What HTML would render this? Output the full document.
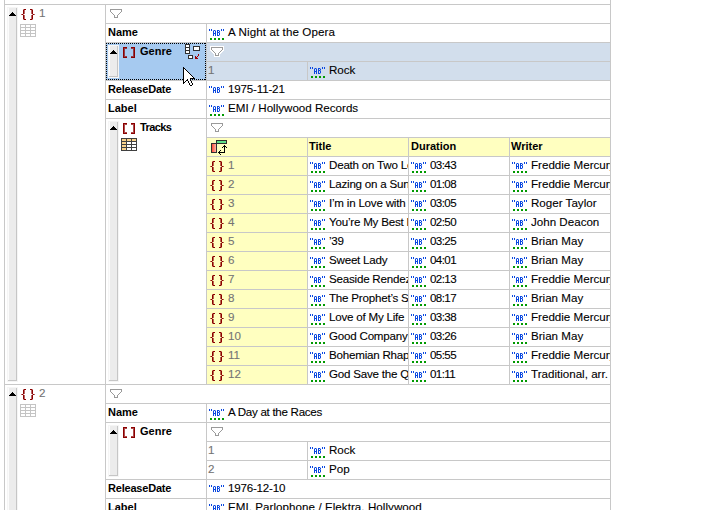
<!DOCTYPE html>
<html><head><meta charset="utf-8"><style>
html,body{margin:0;padding:0;background:#fff;}
body{width:725px;height:510px;position:relative;overflow:hidden;font-family:"Liberation Sans",sans-serif;}
svg{position:absolute;left:0;top:0;}
.t{position:absolute;white-space:nowrap;line-height:18px;height:18px;}
</style></head><body>
<svg width="725" height="510" shape-rendering="crispEdges">
<rect x="106" y="43" width="100" height="37" fill="#a6caf0"/>
<rect x="207" y="43" width="403" height="37" fill="#d2deec"/>
<rect x="207" y="138" width="403" height="18" fill="#ffffc0"/>
<rect x="207" y="157" width="100" height="227" fill="#ffffc0"/>
<rect x="4" y="0" width="1" height="510" fill="#c8c8c8"/>
<rect x="610" y="0" width="1" height="510" fill="#c8c8c8"/>
<rect x="105" y="4" width="1" height="506" fill="#c8c8c8"/>
<rect x="4" y="4" width="607" height="1" fill="#c8c8c8"/>
<rect x="105" y="23" width="506" height="1" fill="#c8c8c8"/>
<rect x="105" y="42" width="506" height="1" fill="#c8c8c8"/>
<rect x="105" y="80" width="506" height="1" fill="#c8c8c8"/>
<rect x="105" y="99" width="506" height="1" fill="#c8c8c8"/>
<rect x="105" y="118" width="506" height="1" fill="#c8c8c8"/>
<rect x="206" y="23" width="1" height="362" fill="#c8c8c8"/>
<rect x="206" y="61" width="405" height="1" fill="#c8c8c8"/>
<rect x="307" y="61" width="1" height="20" fill="#c8c8c8"/>
<rect x="206" y="137" width="405" height="1" fill="#c8c8c8"/>
<rect x="206" y="156" width="405" height="1" fill="#c8c8c8"/>
<rect x="206" y="175" width="405" height="1" fill="#c8c8c8"/>
<rect x="206" y="194" width="405" height="1" fill="#c8c8c8"/>
<rect x="206" y="213" width="405" height="1" fill="#c8c8c8"/>
<rect x="206" y="232" width="405" height="1" fill="#c8c8c8"/>
<rect x="206" y="251" width="405" height="1" fill="#c8c8c8"/>
<rect x="206" y="270" width="405" height="1" fill="#c8c8c8"/>
<rect x="206" y="289" width="405" height="1" fill="#c8c8c8"/>
<rect x="206" y="308" width="405" height="1" fill="#c8c8c8"/>
<rect x="206" y="327" width="405" height="1" fill="#c8c8c8"/>
<rect x="206" y="346" width="405" height="1" fill="#c8c8c8"/>
<rect x="206" y="365" width="405" height="1" fill="#c8c8c8"/>
<rect x="4" y="384" width="607" height="1" fill="#c8c8c8"/>
<rect x="307" y="137" width="1" height="248" fill="#c8c8c8"/>
<rect x="408" y="137" width="1" height="248" fill="#c8c8c8"/>
<rect x="509" y="137" width="1" height="248" fill="#c8c8c8"/>
<rect x="105" y="403" width="506" height="1" fill="#c8c8c8"/>
<rect x="105" y="422" width="506" height="1" fill="#c8c8c8"/>
<rect x="105" y="479" width="506" height="1" fill="#c8c8c8"/>
<rect x="105" y="498" width="506" height="1" fill="#c8c8c8"/>
<rect x="206" y="403" width="1" height="107" fill="#c8c8c8"/>
<rect x="206" y="441" width="405" height="1" fill="#c8c8c8"/>
<rect x="206" y="460" width="405" height="1" fill="#c8c8c8"/>
<rect x="307" y="441" width="1" height="39" fill="#c8c8c8"/>
<rect x="7" y="7" width="11" height="375" fill="#f5f5f5"/>
<rect x="8" y="8" width="9" height="373" fill="#c6c6c6"/>
<rect x="8" y="8" width="8" height="372" fill="#fcfcfc"/>
<rect x="9" y="8" width="7" height="372" fill="#ececec"/>
<rect x="12" y="12" width="1" height="1" fill="#000"/>
<rect x="11" y="13" width="3" height="1" fill="#000"/>
<rect x="10" y="14" width="5" height="1" fill="#000"/>
<rect x="9" y="15" width="7" height="1" fill="#000"/>
<rect x="24" y="9" width="2" height="1" fill="#8b0000"/>
<rect x="23" y="9" width="1" height="1" fill="#8b0000" opacity="0.5"/>
<rect x="23" y="10" width="1" height="4" fill="#8b0000"/>
<rect x="24" y="10" width="1" height="4" fill="#8b0000" opacity="0.6"/>
<rect x="22" y="14" width="1" height="1" fill="#8b0000"/>
<rect x="21" y="14" width="1" height="1" fill="#8b0000" opacity="0.6"/>
<rect x="23" y="14" width="1" height="1" fill="#8b0000" opacity="0.4"/>
<rect x="23" y="15" width="1" height="4" fill="#8b0000"/>
<rect x="24" y="15" width="1" height="4" fill="#8b0000" opacity="0.6"/>
<rect x="24" y="19" width="2" height="1" fill="#8b0000"/>
<rect x="23" y="19" width="1" height="1" fill="#8b0000" opacity="0.5"/>
<rect x="30" y="9" width="2" height="1" fill="#8b0000"/>
<rect x="32" y="9" width="1" height="1" fill="#8b0000" opacity="0.5"/>
<rect x="32" y="10" width="1" height="4" fill="#8b0000"/>
<rect x="31" y="10" width="1" height="4" fill="#8b0000" opacity="0.6"/>
<rect x="33" y="14" width="1" height="1" fill="#8b0000"/>
<rect x="34" y="14" width="1" height="1" fill="#8b0000" opacity="0.6"/>
<rect x="32" y="14" width="1" height="1" fill="#8b0000" opacity="0.4"/>
<rect x="32" y="15" width="1" height="4" fill="#8b0000"/>
<rect x="31" y="15" width="1" height="4" fill="#8b0000" opacity="0.6"/>
<rect x="30" y="19" width="2" height="1" fill="#8b0000"/>
<rect x="32" y="19" width="1" height="1" fill="#8b0000" opacity="0.5"/>
<rect x="20" y="24" width="16" height="13" fill="#c4c4c4"/>
<rect x="21" y="25" width="4" height="2" fill="#ffffff"/>
<rect x="26" y="25" width="4" height="2" fill="#ffffff"/>
<rect x="31" y="25" width="4" height="2" fill="#ffffff"/>
<rect x="21" y="28" width="4" height="2" fill="#ffffff"/>
<rect x="26" y="28" width="4" height="2" fill="#ffffff"/>
<rect x="31" y="28" width="4" height="2" fill="#ffffff"/>
<rect x="21" y="31" width="4" height="2" fill="#ffffff"/>
<rect x="26" y="31" width="4" height="2" fill="#ffffff"/>
<rect x="31" y="31" width="4" height="2" fill="#ffffff"/>
<rect x="21" y="34" width="4" height="2" fill="#ffffff"/>
<rect x="26" y="34" width="4" height="2" fill="#ffffff"/>
<rect x="31" y="34" width="4" height="2" fill="#ffffff"/>
<rect x="110" y="9" width="1" height="1" fill="#9a9a9a"/>
<rect x="111" y="9" width="1" height="1" fill="#9a9a9a"/>
<rect x="112" y="9" width="1" height="1" fill="#9a9a9a"/>
<rect x="113" y="9" width="1" height="1" fill="#9a9a9a"/>
<rect x="114" y="9" width="1" height="1" fill="#9a9a9a"/>
<rect x="115" y="9" width="1" height="1" fill="#9a9a9a"/>
<rect x="116" y="9" width="1" height="1" fill="#9a9a9a"/>
<rect x="117" y="9" width="1" height="1" fill="#9a9a9a"/>
<rect x="118" y="9" width="1" height="1" fill="#9a9a9a"/>
<rect x="119" y="9" width="1" height="1" fill="#9a9a9a"/>
<rect x="120" y="9" width="1" height="1" fill="#9a9a9a"/>
<rect x="121" y="9" width="1" height="1" fill="#9a9a9a"/>
<rect x="110" y="10" width="1" height="1" fill="#9a9a9a"/>
<rect x="111" y="10" width="1" height="1" fill="#ffffff"/>
<rect x="112" y="10" width="1" height="1" fill="#ffffff"/>
<rect x="113" y="10" width="1" height="1" fill="#ffffff"/>
<rect x="114" y="10" width="1" height="1" fill="#ffffff"/>
<rect x="115" y="10" width="1" height="1" fill="#ffffff"/>
<rect x="116" y="10" width="1" height="1" fill="#ffffff"/>
<rect x="117" y="10" width="1" height="1" fill="#ffffff"/>
<rect x="118" y="10" width="1" height="1" fill="#ffffff"/>
<rect x="119" y="10" width="1" height="1" fill="#ffffff"/>
<rect x="120" y="10" width="1" height="1" fill="#ffffff"/>
<rect x="121" y="10" width="1" height="1" fill="#9a9a9a"/>
<rect x="110" y="11" width="1" height="1" fill="#9a9a9a"/>
<rect x="111" y="11" width="1" height="1" fill="#ffffff"/>
<rect x="112" y="11" width="1" height="1" fill="#ffffff"/>
<rect x="113" y="11" width="1" height="1" fill="#ffffff"/>
<rect x="114" y="11" width="1" height="1" fill="#ffffff"/>
<rect x="115" y="11" width="1" height="1" fill="#ffffff"/>
<rect x="116" y="11" width="1" height="1" fill="#ffffff"/>
<rect x="117" y="11" width="1" height="1" fill="#ffffff"/>
<rect x="118" y="11" width="1" height="1" fill="#ffffff"/>
<rect x="119" y="11" width="1" height="1" fill="#ffffff"/>
<rect x="120" y="11" width="1" height="1" fill="#ffffff"/>
<rect x="121" y="11" width="1" height="1" fill="#9a9a9a"/>
<rect x="111" y="12" width="1" height="1" fill="#9a9a9a"/>
<rect x="112" y="12" width="1" height="1" fill="#ffffff"/>
<rect x="113" y="12" width="1" height="1" fill="#ffffff"/>
<rect x="114" y="12" width="1" height="1" fill="#ffffff"/>
<rect x="115" y="12" width="1" height="1" fill="#ffffff"/>
<rect x="116" y="12" width="1" height="1" fill="#ffffff"/>
<rect x="117" y="12" width="1" height="1" fill="#ffffff"/>
<rect x="118" y="12" width="1" height="1" fill="#ffffff"/>
<rect x="119" y="12" width="1" height="1" fill="#ffffff"/>
<rect x="120" y="12" width="1" height="1" fill="#9a9a9a"/>
<rect x="112" y="13" width="1" height="1" fill="#9a9a9a"/>
<rect x="113" y="13" width="1" height="1" fill="#ffffff"/>
<rect x="114" y="13" width="1" height="1" fill="#ffffff"/>
<rect x="115" y="13" width="1" height="1" fill="#ffffff"/>
<rect x="116" y="13" width="1" height="1" fill="#ffffff"/>
<rect x="117" y="13" width="1" height="1" fill="#ffffff"/>
<rect x="118" y="13" width="1" height="1" fill="#ffffff"/>
<rect x="119" y="13" width="1" height="1" fill="#9a9a9a"/>
<rect x="113" y="14" width="1" height="1" fill="#9a9a9a"/>
<rect x="114" y="14" width="1" height="1" fill="#ffffff"/>
<rect x="115" y="14" width="1" height="1" fill="#ffffff"/>
<rect x="116" y="14" width="1" height="1" fill="#ffffff"/>
<rect x="117" y="14" width="1" height="1" fill="#ffffff"/>
<rect x="118" y="14" width="1" height="1" fill="#9a9a9a"/>
<rect x="114" y="15" width="1" height="1" fill="#9a9a9a"/>
<rect x="115" y="15" width="1" height="1" fill="#ffffff"/>
<rect x="116" y="15" width="1" height="1" fill="#ffffff"/>
<rect x="117" y="15" width="1" height="1" fill="#9a9a9a"/>
<rect x="114" y="16" width="1" height="1" fill="#9a9a9a"/>
<rect x="115" y="16" width="1" height="1" fill="#ffffff"/>
<rect x="116" y="16" width="1" height="1" fill="#ffffff"/>
<rect x="117" y="16" width="1" height="1" fill="#9a9a9a"/>
<rect x="114" y="17" width="1" height="1" fill="#9a9a9a"/>
<rect x="115" y="17" width="1" height="1" fill="#9a9a9a"/>
<rect x="116" y="17" width="1" height="1" fill="#9a9a9a"/>
<rect x="117" y="17" width="1" height="1" fill="#9a9a9a"/>
<rect x="209" y="29" width="1" height="2" fill="#0a48e0"/>
<rect x="211" y="29" width="1" height="2" fill="#0a48e0"/>
<rect x="221" y="29" width="1" height="2" fill="#0a48e0"/>
<rect x="223" y="29" width="1" height="2" fill="#0a48e0"/>
<rect x="213" y="31" width="1" height="5" fill="#0a48e0"/>
<rect x="215" y="31" width="1" height="5" fill="#0a48e0"/>
<rect x="214" y="30" width="1" height="1" fill="#0a48e0"/>
<rect x="214" y="33" width="1" height="1" fill="#0a48e0"/>
<rect x="213" y="30" width="1" height="1" fill="#0a48e0" opacity="0.5"/>
<rect x="215" y="30" width="1" height="1" fill="#0a48e0" opacity="0.5"/>
<rect x="217" y="30" width="1" height="6" fill="#0a48e0"/>
<rect x="218" y="30" width="1" height="1" fill="#0a48e0"/>
<rect x="218" y="32" width="1" height="1" fill="#0a48e0"/>
<rect x="218" y="35" width="1" height="1" fill="#0a48e0"/>
<rect x="219" y="31" width="1" height="1" fill="#0a48e0"/>
<rect x="219" y="33" width="1" height="2" fill="#0a48e0"/>
<rect x="219" y="30" width="1" height="1" fill="#0a48e0" opacity="0.35"/>
<rect x="219" y="32" width="1" height="1" fill="#0a48e0" opacity="0.6"/>
<rect x="219" y="35" width="1" height="1" fill="#0a48e0" opacity="0.35"/>
<rect x="210" y="38" width="2" height="2" fill="#009a00"/>
<rect x="214" y="38" width="2" height="2" fill="#009a00"/>
<rect x="218" y="38" width="2" height="2" fill="#009a00"/>
<rect x="222" y="38" width="2" height="2" fill="#009a00"/>
<rect x="108" y="45" width="11" height="33" fill="#f5f5f5"/>
<rect x="109" y="46" width="9" height="31" fill="#c6c6c6"/>
<rect x="109" y="46" width="8" height="30" fill="#fcfcfc"/>
<rect x="110" y="46" width="7" height="30" fill="#ececec"/>
<rect x="113" y="50" width="1" height="1" fill="#000"/>
<rect x="112" y="51" width="3" height="1" fill="#000"/>
<rect x="111" y="52" width="5" height="1" fill="#000"/>
<rect x="110" y="53" width="7" height="1" fill="#000"/>
<rect x="123" y="47" width="1" height="11" fill="#8b0000"/>
<rect x="124" y="47" width="3" height="1" fill="#8b0000"/>
<rect x="124" y="57" width="3" height="1" fill="#8b0000"/>
<rect x="124" y="48" width="1" height="9" fill="#8b0000" opacity="0.7"/>
<rect x="125" y="48" width="2" height="1" fill="#8b0000" opacity="0.7"/>
<rect x="125" y="56" width="2" height="1" fill="#8b0000" opacity="0.7"/>
<rect x="134" y="47" width="1" height="11" fill="#8b0000"/>
<rect x="131" y="47" width="3" height="1" fill="#8b0000"/>
<rect x="131" y="57" width="3" height="1" fill="#8b0000"/>
<rect x="133" y="48" width="1" height="9" fill="#8b0000" opacity="0.7"/>
<rect x="131" y="48" width="2" height="1" fill="#8b0000" opacity="0.7"/>
<rect x="131" y="56" width="2" height="1" fill="#8b0000" opacity="0.7"/>
<rect x="211" y="51" width="1" height="1" fill="#ffffff"/>
<rect x="220" y="51" width="1" height="1" fill="#ffffff"/>
<rect x="212" y="52" width="1" height="1" fill="#ffffff"/>
<rect x="221" y="52" width="1" height="1" fill="#ffffff"/>
<rect x="219" y="56" width="1" height="1" fill="#ffffff"/>
<rect x="216" y="47" width="1" height="1" fill="#ffffff"/>
<rect x="213" y="49" width="1" height="1" fill="#ffffff"/>
<rect x="222" y="49" width="1" height="1" fill="#ffffff"/>
<rect x="213" y="53" width="1" height="1" fill="#ffffff"/>
<rect x="210" y="46" width="1" height="1" fill="#ffffff"/>
<rect x="218" y="46" width="1" height="1" fill="#ffffff"/>
<rect x="213" y="51" width="1" height="1" fill="#ffffff"/>
<rect x="217" y="50" width="1" height="1" fill="#ffffff"/>
<rect x="214" y="52" width="1" height="1" fill="#ffffff"/>
<rect x="210" y="47" width="1" height="1" fill="#ffffff"/>
<rect x="218" y="47" width="1" height="1" fill="#ffffff"/>
<rect x="215" y="49" width="1" height="1" fill="#ffffff"/>
<rect x="219" y="48" width="1" height="1" fill="#ffffff"/>
<rect x="215" y="53" width="1" height="1" fill="#ffffff"/>
<rect x="214" y="54" width="1" height="1" fill="#ffffff"/>
<rect x="211" y="46" width="1" height="1" fill="#ffffff"/>
<rect x="220" y="46" width="1" height="1" fill="#ffffff"/>
<rect x="219" y="50" width="1" height="1" fill="#ffffff"/>
<rect x="216" y="52" width="1" height="1" fill="#ffffff"/>
<rect x="215" y="55" width="1" height="1" fill="#ffffff"/>
<rect x="214" y="56" width="1" height="1" fill="#ffffff"/>
<rect x="211" y="47" width="1" height="1" fill="#ffffff"/>
<rect x="220" y="47" width="1" height="1" fill="#ffffff"/>
<rect x="221" y="48" width="1" height="1" fill="#ffffff"/>
<rect x="217" y="53" width="1" height="1" fill="#ffffff"/>
<rect x="216" y="54" width="1" height="1" fill="#ffffff"/>
<rect x="213" y="46" width="1" height="1" fill="#ffffff"/>
<rect x="222" y="46" width="1" height="1" fill="#ffffff"/>
<rect x="212" y="50" width="1" height="1" fill="#ffffff"/>
<rect x="221" y="50" width="1" height="1" fill="#ffffff"/>
<rect x="218" y="52" width="1" height="1" fill="#ffffff"/>
<rect x="216" y="56" width="1" height="1" fill="#ffffff"/>
<rect x="213" y="47" width="1" height="1" fill="#ffffff"/>
<rect x="214" y="48" width="1" height="1" fill="#ffffff"/>
<rect x="223" y="48" width="1" height="1" fill="#ffffff"/>
<rect x="218" y="54" width="1" height="1" fill="#ffffff"/>
<rect x="215" y="46" width="1" height="1" fill="#ffffff"/>
<rect x="214" y="50" width="1" height="1" fill="#ffffff"/>
<rect x="223" y="50" width="1" height="1" fill="#ffffff"/>
<rect x="220" y="52" width="1" height="1" fill="#ffffff"/>
<rect x="222" y="51" width="1" height="1" fill="#ffffff"/>
<rect x="218" y="56" width="1" height="1" fill="#ffffff"/>
<rect x="216" y="48" width="1" height="1" fill="#ffffff"/>
<rect x="216" y="50" width="1" height="1" fill="#ffffff"/>
<rect x="213" y="52" width="1" height="1" fill="#ffffff"/>
<rect x="215" y="51" width="1" height="1" fill="#ffffff"/>
<rect x="210" y="48" width="1" height="1" fill="#ffffff"/>
<rect x="218" y="48" width="1" height="1" fill="#ffffff"/>
<rect x="217" y="49" width="1" height="1" fill="#ffffff"/>
<rect x="210" y="50" width="1" height="1" fill="#ffffff"/>
<rect x="218" y="50" width="1" height="1" fill="#ffffff"/>
<rect x="215" y="52" width="1" height="1" fill="#ffffff"/>
<rect x="217" y="51" width="1" height="1" fill="#ffffff"/>
<rect x="217" y="55" width="1" height="1" fill="#ffffff"/>
<rect x="211" y="48" width="1" height="1" fill="#ffffff"/>
<rect x="220" y="48" width="1" height="1" fill="#ffffff"/>
<rect x="222" y="47" width="1" height="1" fill="#ffffff"/>
<rect x="219" y="49" width="1" height="1" fill="#ffffff"/>
<rect x="215" y="54" width="1" height="1" fill="#ffffff"/>
<rect x="219" y="53" width="1" height="1" fill="#ffffff"/>
<rect x="211" y="50" width="1" height="1" fill="#ffffff"/>
<rect x="220" y="50" width="1" height="1" fill="#ffffff"/>
<rect x="217" y="52" width="1" height="1" fill="#ffffff"/>
<rect x="219" y="51" width="1" height="1" fill="#ffffff"/>
<rect x="219" y="55" width="1" height="1" fill="#ffffff"/>
<rect x="213" y="48" width="1" height="1" fill="#ffffff"/>
<rect x="215" y="47" width="1" height="1" fill="#ffffff"/>
<rect x="212" y="49" width="1" height="1" fill="#ffffff"/>
<rect x="222" y="48" width="1" height="1" fill="#ffffff"/>
<rect x="221" y="49" width="1" height="1" fill="#ffffff"/>
<rect x="217" y="46" width="1" height="1" fill="#ffffff"/>
<rect x="213" y="50" width="1" height="1" fill="#ffffff"/>
<rect x="212" y="51" width="1" height="1" fill="#ffffff"/>
<rect x="222" y="50" width="1" height="1" fill="#ffffff"/>
<rect x="221" y="51" width="1" height="1" fill="#ffffff"/>
<rect x="215" y="48" width="1" height="1" fill="#ffffff"/>
<rect x="217" y="47" width="1" height="1" fill="#ffffff"/>
<rect x="214" y="49" width="1" height="1" fill="#ffffff"/>
<rect x="223" y="49" width="1" height="1" fill="#ffffff"/>
<rect x="214" y="53" width="1" height="1" fill="#ffffff"/>
<rect x="219" y="46" width="1" height="1" fill="#ffffff"/>
<rect x="215" y="50" width="1" height="1" fill="#ffffff"/>
<rect x="214" y="51" width="1" height="1" fill="#ffffff"/>
<rect x="214" y="55" width="1" height="1" fill="#ffffff"/>
<rect x="217" y="48" width="1" height="1" fill="#ffffff"/>
<rect x="219" y="47" width="1" height="1" fill="#ffffff"/>
<rect x="216" y="49" width="1" height="1" fill="#ffffff"/>
<rect x="216" y="53" width="1" height="1" fill="#ffffff"/>
<rect x="212" y="46" width="1" height="1" fill="#ffffff"/>
<rect x="221" y="46" width="1" height="1" fill="#ffffff"/>
<rect x="216" y="51" width="1" height="1" fill="#ffffff"/>
<rect x="216" y="55" width="1" height="1" fill="#ffffff"/>
<rect x="215" y="56" width="1" height="1" fill="#ffffff"/>
<rect x="212" y="47" width="1" height="1" fill="#ffffff"/>
<rect x="210" y="49" width="1" height="1" fill="#ffffff"/>
<rect x="221" y="47" width="1" height="1" fill="#ffffff"/>
<rect x="218" y="49" width="1" height="1" fill="#ffffff"/>
<rect x="218" y="53" width="1" height="1" fill="#ffffff"/>
<rect x="217" y="54" width="1" height="1" fill="#ffffff"/>
<rect x="214" y="46" width="1" height="1" fill="#ffffff"/>
<rect x="223" y="46" width="1" height="1" fill="#ffffff"/>
<rect x="218" y="51" width="1" height="1" fill="#ffffff"/>
<rect x="219" y="52" width="1" height="1" fill="#ffffff"/>
<rect x="218" y="55" width="1" height="1" fill="#ffffff"/>
<rect x="212" y="48" width="1" height="1" fill="#ffffff"/>
<rect x="214" y="47" width="1" height="1" fill="#ffffff"/>
<rect x="211" y="49" width="1" height="1" fill="#ffffff"/>
<rect x="217" y="56" width="1" height="1" fill="#ffffff"/>
<rect x="223" y="47" width="1" height="1" fill="#ffffff"/>
<rect x="220" y="49" width="1" height="1" fill="#ffffff"/>
<rect x="220" y="53" width="1" height="1" fill="#ffffff"/>
<rect x="219" y="54" width="1" height="1" fill="#ffffff"/>
<rect x="216" y="46" width="1" height="1" fill="#ffffff"/>
<rect x="211" y="47" width="1" height="1" fill="#9a9a9a"/>
<rect x="212" y="47" width="1" height="1" fill="#9a9a9a"/>
<rect x="213" y="47" width="1" height="1" fill="#9a9a9a"/>
<rect x="214" y="47" width="1" height="1" fill="#9a9a9a"/>
<rect x="215" y="47" width="1" height="1" fill="#9a9a9a"/>
<rect x="216" y="47" width="1" height="1" fill="#9a9a9a"/>
<rect x="217" y="47" width="1" height="1" fill="#9a9a9a"/>
<rect x="218" y="47" width="1" height="1" fill="#9a9a9a"/>
<rect x="219" y="47" width="1" height="1" fill="#9a9a9a"/>
<rect x="220" y="47" width="1" height="1" fill="#9a9a9a"/>
<rect x="221" y="47" width="1" height="1" fill="#9a9a9a"/>
<rect x="222" y="47" width="1" height="1" fill="#9a9a9a"/>
<rect x="211" y="48" width="1" height="1" fill="#9a9a9a"/>
<rect x="212" y="48" width="1" height="1" fill="#ffffff"/>
<rect x="213" y="48" width="1" height="1" fill="#ffffff"/>
<rect x="214" y="48" width="1" height="1" fill="#ffffff"/>
<rect x="215" y="48" width="1" height="1" fill="#ffffff"/>
<rect x="216" y="48" width="1" height="1" fill="#ffffff"/>
<rect x="217" y="48" width="1" height="1" fill="#ffffff"/>
<rect x="218" y="48" width="1" height="1" fill="#ffffff"/>
<rect x="219" y="48" width="1" height="1" fill="#ffffff"/>
<rect x="220" y="48" width="1" height="1" fill="#ffffff"/>
<rect x="221" y="48" width="1" height="1" fill="#ffffff"/>
<rect x="222" y="48" width="1" height="1" fill="#9a9a9a"/>
<rect x="211" y="49" width="1" height="1" fill="#9a9a9a"/>
<rect x="212" y="49" width="1" height="1" fill="#ffffff"/>
<rect x="213" y="49" width="1" height="1" fill="#ffffff"/>
<rect x="214" y="49" width="1" height="1" fill="#ffffff"/>
<rect x="215" y="49" width="1" height="1" fill="#ffffff"/>
<rect x="216" y="49" width="1" height="1" fill="#ffffff"/>
<rect x="217" y="49" width="1" height="1" fill="#ffffff"/>
<rect x="218" y="49" width="1" height="1" fill="#ffffff"/>
<rect x="219" y="49" width="1" height="1" fill="#ffffff"/>
<rect x="220" y="49" width="1" height="1" fill="#ffffff"/>
<rect x="221" y="49" width="1" height="1" fill="#ffffff"/>
<rect x="222" y="49" width="1" height="1" fill="#9a9a9a"/>
<rect x="212" y="50" width="1" height="1" fill="#9a9a9a"/>
<rect x="213" y="50" width="1" height="1" fill="#ffffff"/>
<rect x="214" y="50" width="1" height="1" fill="#ffffff"/>
<rect x="215" y="50" width="1" height="1" fill="#ffffff"/>
<rect x="216" y="50" width="1" height="1" fill="#ffffff"/>
<rect x="217" y="50" width="1" height="1" fill="#ffffff"/>
<rect x="218" y="50" width="1" height="1" fill="#ffffff"/>
<rect x="219" y="50" width="1" height="1" fill="#ffffff"/>
<rect x="220" y="50" width="1" height="1" fill="#ffffff"/>
<rect x="221" y="50" width="1" height="1" fill="#9a9a9a"/>
<rect x="213" y="51" width="1" height="1" fill="#9a9a9a"/>
<rect x="214" y="51" width="1" height="1" fill="#ffffff"/>
<rect x="215" y="51" width="1" height="1" fill="#ffffff"/>
<rect x="216" y="51" width="1" height="1" fill="#ffffff"/>
<rect x="217" y="51" width="1" height="1" fill="#ffffff"/>
<rect x="218" y="51" width="1" height="1" fill="#ffffff"/>
<rect x="219" y="51" width="1" height="1" fill="#ffffff"/>
<rect x="220" y="51" width="1" height="1" fill="#9a9a9a"/>
<rect x="214" y="52" width="1" height="1" fill="#9a9a9a"/>
<rect x="215" y="52" width="1" height="1" fill="#ffffff"/>
<rect x="216" y="52" width="1" height="1" fill="#ffffff"/>
<rect x="217" y="52" width="1" height="1" fill="#ffffff"/>
<rect x="218" y="52" width="1" height="1" fill="#ffffff"/>
<rect x="219" y="52" width="1" height="1" fill="#9a9a9a"/>
<rect x="215" y="53" width="1" height="1" fill="#9a9a9a"/>
<rect x="216" y="53" width="1" height="1" fill="#ffffff"/>
<rect x="217" y="53" width="1" height="1" fill="#ffffff"/>
<rect x="218" y="53" width="1" height="1" fill="#9a9a9a"/>
<rect x="215" y="54" width="1" height="1" fill="#9a9a9a"/>
<rect x="216" y="54" width="1" height="1" fill="#ffffff"/>
<rect x="217" y="54" width="1" height="1" fill="#ffffff"/>
<rect x="218" y="54" width="1" height="1" fill="#9a9a9a"/>
<rect x="215" y="55" width="1" height="1" fill="#9a9a9a"/>
<rect x="216" y="55" width="1" height="1" fill="#9a9a9a"/>
<rect x="217" y="55" width="1" height="1" fill="#9a9a9a"/>
<rect x="218" y="55" width="1" height="1" fill="#9a9a9a"/>
<rect x="310" y="67" width="1" height="2" fill="#0a48e0"/>
<rect x="312" y="67" width="1" height="2" fill="#0a48e0"/>
<rect x="322" y="67" width="1" height="2" fill="#0a48e0"/>
<rect x="324" y="67" width="1" height="2" fill="#0a48e0"/>
<rect x="314" y="69" width="1" height="5" fill="#0a48e0"/>
<rect x="316" y="69" width="1" height="5" fill="#0a48e0"/>
<rect x="315" y="68" width="1" height="1" fill="#0a48e0"/>
<rect x="315" y="71" width="1" height="1" fill="#0a48e0"/>
<rect x="314" y="68" width="1" height="1" fill="#0a48e0" opacity="0.5"/>
<rect x="316" y="68" width="1" height="1" fill="#0a48e0" opacity="0.5"/>
<rect x="318" y="68" width="1" height="6" fill="#0a48e0"/>
<rect x="319" y="68" width="1" height="1" fill="#0a48e0"/>
<rect x="319" y="70" width="1" height="1" fill="#0a48e0"/>
<rect x="319" y="73" width="1" height="1" fill="#0a48e0"/>
<rect x="320" y="69" width="1" height="1" fill="#0a48e0"/>
<rect x="320" y="71" width="1" height="2" fill="#0a48e0"/>
<rect x="320" y="68" width="1" height="1" fill="#0a48e0" opacity="0.35"/>
<rect x="320" y="70" width="1" height="1" fill="#0a48e0" opacity="0.6"/>
<rect x="320" y="73" width="1" height="1" fill="#0a48e0" opacity="0.35"/>
<rect x="311" y="76" width="2" height="2" fill="#009a00"/>
<rect x="315" y="76" width="2" height="2" fill="#009a00"/>
<rect x="319" y="76" width="2" height="2" fill="#009a00"/>
<rect x="323" y="76" width="2" height="2" fill="#009a00"/>
<rect x="209" y="86" width="1" height="2" fill="#0a48e0"/>
<rect x="211" y="86" width="1" height="2" fill="#0a48e0"/>
<rect x="221" y="86" width="1" height="2" fill="#0a48e0"/>
<rect x="223" y="86" width="1" height="2" fill="#0a48e0"/>
<rect x="213" y="88" width="1" height="5" fill="#0a48e0"/>
<rect x="215" y="88" width="1" height="5" fill="#0a48e0"/>
<rect x="214" y="87" width="1" height="1" fill="#0a48e0"/>
<rect x="214" y="90" width="1" height="1" fill="#0a48e0"/>
<rect x="213" y="87" width="1" height="1" fill="#0a48e0" opacity="0.5"/>
<rect x="215" y="87" width="1" height="1" fill="#0a48e0" opacity="0.5"/>
<rect x="217" y="87" width="1" height="6" fill="#0a48e0"/>
<rect x="218" y="87" width="1" height="1" fill="#0a48e0"/>
<rect x="218" y="89" width="1" height="1" fill="#0a48e0"/>
<rect x="218" y="92" width="1" height="1" fill="#0a48e0"/>
<rect x="219" y="88" width="1" height="1" fill="#0a48e0"/>
<rect x="219" y="90" width="1" height="2" fill="#0a48e0"/>
<rect x="219" y="87" width="1" height="1" fill="#0a48e0" opacity="0.35"/>
<rect x="219" y="89" width="1" height="1" fill="#0a48e0" opacity="0.6"/>
<rect x="219" y="92" width="1" height="1" fill="#0a48e0" opacity="0.35"/>
<rect x="209" y="105" width="1" height="2" fill="#0a48e0"/>
<rect x="211" y="105" width="1" height="2" fill="#0a48e0"/>
<rect x="221" y="105" width="1" height="2" fill="#0a48e0"/>
<rect x="223" y="105" width="1" height="2" fill="#0a48e0"/>
<rect x="213" y="107" width="1" height="5" fill="#0a48e0"/>
<rect x="215" y="107" width="1" height="5" fill="#0a48e0"/>
<rect x="214" y="106" width="1" height="1" fill="#0a48e0"/>
<rect x="214" y="109" width="1" height="1" fill="#0a48e0"/>
<rect x="213" y="106" width="1" height="1" fill="#0a48e0" opacity="0.5"/>
<rect x="215" y="106" width="1" height="1" fill="#0a48e0" opacity="0.5"/>
<rect x="217" y="106" width="1" height="6" fill="#0a48e0"/>
<rect x="218" y="106" width="1" height="1" fill="#0a48e0"/>
<rect x="218" y="108" width="1" height="1" fill="#0a48e0"/>
<rect x="218" y="111" width="1" height="1" fill="#0a48e0"/>
<rect x="219" y="107" width="1" height="1" fill="#0a48e0"/>
<rect x="219" y="109" width="1" height="2" fill="#0a48e0"/>
<rect x="219" y="106" width="1" height="1" fill="#0a48e0" opacity="0.35"/>
<rect x="219" y="108" width="1" height="1" fill="#0a48e0" opacity="0.6"/>
<rect x="219" y="111" width="1" height="1" fill="#0a48e0" opacity="0.35"/>
<rect x="210" y="114" width="2" height="2" fill="#009a00"/>
<rect x="214" y="114" width="2" height="2" fill="#009a00"/>
<rect x="218" y="114" width="2" height="2" fill="#009a00"/>
<rect x="222" y="114" width="2" height="2" fill="#009a00"/>
<rect x="108" y="121" width="11" height="261" fill="#f5f5f5"/>
<rect x="109" y="122" width="9" height="259" fill="#c6c6c6"/>
<rect x="109" y="122" width="8" height="258" fill="#fcfcfc"/>
<rect x="110" y="122" width="7" height="258" fill="#ececec"/>
<rect x="113" y="126" width="1" height="1" fill="#000"/>
<rect x="112" y="127" width="3" height="1" fill="#000"/>
<rect x="111" y="128" width="5" height="1" fill="#000"/>
<rect x="110" y="129" width="7" height="1" fill="#000"/>
<rect x="123" y="123" width="1" height="11" fill="#8b0000"/>
<rect x="124" y="123" width="3" height="1" fill="#8b0000"/>
<rect x="124" y="133" width="3" height="1" fill="#8b0000"/>
<rect x="124" y="124" width="1" height="9" fill="#8b0000" opacity="0.7"/>
<rect x="125" y="124" width="2" height="1" fill="#8b0000" opacity="0.7"/>
<rect x="125" y="132" width="2" height="1" fill="#8b0000" opacity="0.7"/>
<rect x="134" y="123" width="1" height="11" fill="#8b0000"/>
<rect x="131" y="123" width="3" height="1" fill="#8b0000"/>
<rect x="131" y="133" width="3" height="1" fill="#8b0000"/>
<rect x="133" y="124" width="1" height="9" fill="#8b0000" opacity="0.7"/>
<rect x="131" y="124" width="2" height="1" fill="#8b0000" opacity="0.7"/>
<rect x="131" y="132" width="2" height="1" fill="#8b0000" opacity="0.7"/>
<rect x="121" y="138" width="16" height="13" fill="#404040"/>
<rect x="122" y="139" width="4" height="2" fill="#f9d38c"/>
<rect x="127" y="139" width="4" height="2" fill="#f9d38c"/>
<rect x="132" y="139" width="4" height="2" fill="#f9d38c"/>
<rect x="122" y="142" width="4" height="2" fill="#f9d38c"/>
<rect x="127" y="142" width="4" height="2" fill="#ffffff"/>
<rect x="132" y="142" width="4" height="2" fill="#ffffff"/>
<rect x="122" y="145" width="4" height="2" fill="#f9d38c"/>
<rect x="127" y="145" width="4" height="2" fill="#ffffff"/>
<rect x="132" y="145" width="4" height="2" fill="#ffffff"/>
<rect x="122" y="148" width="4" height="2" fill="#f9d38c"/>
<rect x="127" y="148" width="4" height="2" fill="#ffffff"/>
<rect x="132" y="148" width="4" height="2" fill="#ffffff"/>
<rect x="211" y="123" width="1" height="1" fill="#9a9a9a"/>
<rect x="212" y="123" width="1" height="1" fill="#9a9a9a"/>
<rect x="213" y="123" width="1" height="1" fill="#9a9a9a"/>
<rect x="214" y="123" width="1" height="1" fill="#9a9a9a"/>
<rect x="215" y="123" width="1" height="1" fill="#9a9a9a"/>
<rect x="216" y="123" width="1" height="1" fill="#9a9a9a"/>
<rect x="217" y="123" width="1" height="1" fill="#9a9a9a"/>
<rect x="218" y="123" width="1" height="1" fill="#9a9a9a"/>
<rect x="219" y="123" width="1" height="1" fill="#9a9a9a"/>
<rect x="220" y="123" width="1" height="1" fill="#9a9a9a"/>
<rect x="221" y="123" width="1" height="1" fill="#9a9a9a"/>
<rect x="222" y="123" width="1" height="1" fill="#9a9a9a"/>
<rect x="211" y="124" width="1" height="1" fill="#9a9a9a"/>
<rect x="212" y="124" width="1" height="1" fill="#ffffff"/>
<rect x="213" y="124" width="1" height="1" fill="#ffffff"/>
<rect x="214" y="124" width="1" height="1" fill="#ffffff"/>
<rect x="215" y="124" width="1" height="1" fill="#ffffff"/>
<rect x="216" y="124" width="1" height="1" fill="#ffffff"/>
<rect x="217" y="124" width="1" height="1" fill="#ffffff"/>
<rect x="218" y="124" width="1" height="1" fill="#ffffff"/>
<rect x="219" y="124" width="1" height="1" fill="#ffffff"/>
<rect x="220" y="124" width="1" height="1" fill="#ffffff"/>
<rect x="221" y="124" width="1" height="1" fill="#ffffff"/>
<rect x="222" y="124" width="1" height="1" fill="#9a9a9a"/>
<rect x="211" y="125" width="1" height="1" fill="#9a9a9a"/>
<rect x="212" y="125" width="1" height="1" fill="#ffffff"/>
<rect x="213" y="125" width="1" height="1" fill="#ffffff"/>
<rect x="214" y="125" width="1" height="1" fill="#ffffff"/>
<rect x="215" y="125" width="1" height="1" fill="#ffffff"/>
<rect x="216" y="125" width="1" height="1" fill="#ffffff"/>
<rect x="217" y="125" width="1" height="1" fill="#ffffff"/>
<rect x="218" y="125" width="1" height="1" fill="#ffffff"/>
<rect x="219" y="125" width="1" height="1" fill="#ffffff"/>
<rect x="220" y="125" width="1" height="1" fill="#ffffff"/>
<rect x="221" y="125" width="1" height="1" fill="#ffffff"/>
<rect x="222" y="125" width="1" height="1" fill="#9a9a9a"/>
<rect x="212" y="126" width="1" height="1" fill="#9a9a9a"/>
<rect x="213" y="126" width="1" height="1" fill="#ffffff"/>
<rect x="214" y="126" width="1" height="1" fill="#ffffff"/>
<rect x="215" y="126" width="1" height="1" fill="#ffffff"/>
<rect x="216" y="126" width="1" height="1" fill="#ffffff"/>
<rect x="217" y="126" width="1" height="1" fill="#ffffff"/>
<rect x="218" y="126" width="1" height="1" fill="#ffffff"/>
<rect x="219" y="126" width="1" height="1" fill="#ffffff"/>
<rect x="220" y="126" width="1" height="1" fill="#ffffff"/>
<rect x="221" y="126" width="1" height="1" fill="#9a9a9a"/>
<rect x="213" y="127" width="1" height="1" fill="#9a9a9a"/>
<rect x="214" y="127" width="1" height="1" fill="#ffffff"/>
<rect x="215" y="127" width="1" height="1" fill="#ffffff"/>
<rect x="216" y="127" width="1" height="1" fill="#ffffff"/>
<rect x="217" y="127" width="1" height="1" fill="#ffffff"/>
<rect x="218" y="127" width="1" height="1" fill="#ffffff"/>
<rect x="219" y="127" width="1" height="1" fill="#ffffff"/>
<rect x="220" y="127" width="1" height="1" fill="#9a9a9a"/>
<rect x="214" y="128" width="1" height="1" fill="#9a9a9a"/>
<rect x="215" y="128" width="1" height="1" fill="#ffffff"/>
<rect x="216" y="128" width="1" height="1" fill="#ffffff"/>
<rect x="217" y="128" width="1" height="1" fill="#ffffff"/>
<rect x="218" y="128" width="1" height="1" fill="#ffffff"/>
<rect x="219" y="128" width="1" height="1" fill="#9a9a9a"/>
<rect x="215" y="129" width="1" height="1" fill="#9a9a9a"/>
<rect x="216" y="129" width="1" height="1" fill="#ffffff"/>
<rect x="217" y="129" width="1" height="1" fill="#ffffff"/>
<rect x="218" y="129" width="1" height="1" fill="#9a9a9a"/>
<rect x="215" y="130" width="1" height="1" fill="#9a9a9a"/>
<rect x="216" y="130" width="1" height="1" fill="#ffffff"/>
<rect x="217" y="130" width="1" height="1" fill="#ffffff"/>
<rect x="218" y="130" width="1" height="1" fill="#9a9a9a"/>
<rect x="215" y="131" width="1" height="1" fill="#9a9a9a"/>
<rect x="216" y="131" width="1" height="1" fill="#9a9a9a"/>
<rect x="217" y="131" width="1" height="1" fill="#9a9a9a"/>
<rect x="218" y="131" width="1" height="1" fill="#9a9a9a"/>
<rect x="213" y="161" width="2" height="1" fill="#8b0000"/>
<rect x="212" y="161" width="1" height="1" fill="#8b0000" opacity="0.5"/>
<rect x="212" y="162" width="1" height="4" fill="#8b0000"/>
<rect x="213" y="162" width="1" height="4" fill="#8b0000" opacity="0.6"/>
<rect x="211" y="166" width="1" height="1" fill="#8b0000"/>
<rect x="210" y="166" width="1" height="1" fill="#8b0000" opacity="0.6"/>
<rect x="212" y="166" width="1" height="1" fill="#8b0000" opacity="0.4"/>
<rect x="212" y="167" width="1" height="4" fill="#8b0000"/>
<rect x="213" y="167" width="1" height="4" fill="#8b0000" opacity="0.6"/>
<rect x="213" y="171" width="2" height="1" fill="#8b0000"/>
<rect x="212" y="171" width="1" height="1" fill="#8b0000" opacity="0.5"/>
<rect x="219" y="161" width="2" height="1" fill="#8b0000"/>
<rect x="221" y="161" width="1" height="1" fill="#8b0000" opacity="0.5"/>
<rect x="221" y="162" width="1" height="4" fill="#8b0000"/>
<rect x="220" y="162" width="1" height="4" fill="#8b0000" opacity="0.6"/>
<rect x="222" y="166" width="1" height="1" fill="#8b0000"/>
<rect x="223" y="166" width="1" height="1" fill="#8b0000" opacity="0.6"/>
<rect x="221" y="166" width="1" height="1" fill="#8b0000" opacity="0.4"/>
<rect x="221" y="167" width="1" height="4" fill="#8b0000"/>
<rect x="220" y="167" width="1" height="4" fill="#8b0000" opacity="0.6"/>
<rect x="219" y="171" width="2" height="1" fill="#8b0000"/>
<rect x="221" y="171" width="1" height="1" fill="#8b0000" opacity="0.5"/>
<rect x="310" y="162" width="1" height="2" fill="#0a48e0"/>
<rect x="312" y="162" width="1" height="2" fill="#0a48e0"/>
<rect x="322" y="162" width="1" height="2" fill="#0a48e0"/>
<rect x="324" y="162" width="1" height="2" fill="#0a48e0"/>
<rect x="314" y="164" width="1" height="5" fill="#0a48e0"/>
<rect x="316" y="164" width="1" height="5" fill="#0a48e0"/>
<rect x="315" y="163" width="1" height="1" fill="#0a48e0"/>
<rect x="315" y="166" width="1" height="1" fill="#0a48e0"/>
<rect x="314" y="163" width="1" height="1" fill="#0a48e0" opacity="0.5"/>
<rect x="316" y="163" width="1" height="1" fill="#0a48e0" opacity="0.5"/>
<rect x="318" y="163" width="1" height="6" fill="#0a48e0"/>
<rect x="319" y="163" width="1" height="1" fill="#0a48e0"/>
<rect x="319" y="165" width="1" height="1" fill="#0a48e0"/>
<rect x="319" y="168" width="1" height="1" fill="#0a48e0"/>
<rect x="320" y="164" width="1" height="1" fill="#0a48e0"/>
<rect x="320" y="166" width="1" height="2" fill="#0a48e0"/>
<rect x="320" y="163" width="1" height="1" fill="#0a48e0" opacity="0.35"/>
<rect x="320" y="165" width="1" height="1" fill="#0a48e0" opacity="0.6"/>
<rect x="320" y="168" width="1" height="1" fill="#0a48e0" opacity="0.35"/>
<rect x="311" y="171" width="2" height="2" fill="#009a00"/>
<rect x="315" y="171" width="2" height="2" fill="#009a00"/>
<rect x="319" y="171" width="2" height="2" fill="#009a00"/>
<rect x="323" y="171" width="2" height="2" fill="#009a00"/>
<rect x="411" y="162" width="1" height="2" fill="#0a48e0"/>
<rect x="413" y="162" width="1" height="2" fill="#0a48e0"/>
<rect x="423" y="162" width="1" height="2" fill="#0a48e0"/>
<rect x="425" y="162" width="1" height="2" fill="#0a48e0"/>
<rect x="415" y="164" width="1" height="5" fill="#0a48e0"/>
<rect x="417" y="164" width="1" height="5" fill="#0a48e0"/>
<rect x="416" y="163" width="1" height="1" fill="#0a48e0"/>
<rect x="416" y="166" width="1" height="1" fill="#0a48e0"/>
<rect x="415" y="163" width="1" height="1" fill="#0a48e0" opacity="0.5"/>
<rect x="417" y="163" width="1" height="1" fill="#0a48e0" opacity="0.5"/>
<rect x="419" y="163" width="1" height="6" fill="#0a48e0"/>
<rect x="420" y="163" width="1" height="1" fill="#0a48e0"/>
<rect x="420" y="165" width="1" height="1" fill="#0a48e0"/>
<rect x="420" y="168" width="1" height="1" fill="#0a48e0"/>
<rect x="421" y="164" width="1" height="1" fill="#0a48e0"/>
<rect x="421" y="166" width="1" height="2" fill="#0a48e0"/>
<rect x="421" y="163" width="1" height="1" fill="#0a48e0" opacity="0.35"/>
<rect x="421" y="165" width="1" height="1" fill="#0a48e0" opacity="0.6"/>
<rect x="421" y="168" width="1" height="1" fill="#0a48e0" opacity="0.35"/>
<rect x="412" y="171" width="2" height="2" fill="#009a00"/>
<rect x="416" y="171" width="2" height="2" fill="#009a00"/>
<rect x="420" y="171" width="2" height="2" fill="#009a00"/>
<rect x="424" y="171" width="2" height="2" fill="#009a00"/>
<rect x="512" y="162" width="1" height="2" fill="#0a48e0"/>
<rect x="514" y="162" width="1" height="2" fill="#0a48e0"/>
<rect x="524" y="162" width="1" height="2" fill="#0a48e0"/>
<rect x="526" y="162" width="1" height="2" fill="#0a48e0"/>
<rect x="516" y="164" width="1" height="5" fill="#0a48e0"/>
<rect x="518" y="164" width="1" height="5" fill="#0a48e0"/>
<rect x="517" y="163" width="1" height="1" fill="#0a48e0"/>
<rect x="517" y="166" width="1" height="1" fill="#0a48e0"/>
<rect x="516" y="163" width="1" height="1" fill="#0a48e0" opacity="0.5"/>
<rect x="518" y="163" width="1" height="1" fill="#0a48e0" opacity="0.5"/>
<rect x="520" y="163" width="1" height="6" fill="#0a48e0"/>
<rect x="521" y="163" width="1" height="1" fill="#0a48e0"/>
<rect x="521" y="165" width="1" height="1" fill="#0a48e0"/>
<rect x="521" y="168" width="1" height="1" fill="#0a48e0"/>
<rect x="522" y="164" width="1" height="1" fill="#0a48e0"/>
<rect x="522" y="166" width="1" height="2" fill="#0a48e0"/>
<rect x="522" y="163" width="1" height="1" fill="#0a48e0" opacity="0.35"/>
<rect x="522" y="165" width="1" height="1" fill="#0a48e0" opacity="0.6"/>
<rect x="522" y="168" width="1" height="1" fill="#0a48e0" opacity="0.35"/>
<rect x="513" y="171" width="2" height="2" fill="#009a00"/>
<rect x="517" y="171" width="2" height="2" fill="#009a00"/>
<rect x="521" y="171" width="2" height="2" fill="#009a00"/>
<rect x="525" y="171" width="2" height="2" fill="#009a00"/>
<rect x="213" y="180" width="2" height="1" fill="#8b0000"/>
<rect x="212" y="180" width="1" height="1" fill="#8b0000" opacity="0.5"/>
<rect x="212" y="181" width="1" height="4" fill="#8b0000"/>
<rect x="213" y="181" width="1" height="4" fill="#8b0000" opacity="0.6"/>
<rect x="211" y="185" width="1" height="1" fill="#8b0000"/>
<rect x="210" y="185" width="1" height="1" fill="#8b0000" opacity="0.6"/>
<rect x="212" y="185" width="1" height="1" fill="#8b0000" opacity="0.4"/>
<rect x="212" y="186" width="1" height="4" fill="#8b0000"/>
<rect x="213" y="186" width="1" height="4" fill="#8b0000" opacity="0.6"/>
<rect x="213" y="190" width="2" height="1" fill="#8b0000"/>
<rect x="212" y="190" width="1" height="1" fill="#8b0000" opacity="0.5"/>
<rect x="219" y="180" width="2" height="1" fill="#8b0000"/>
<rect x="221" y="180" width="1" height="1" fill="#8b0000" opacity="0.5"/>
<rect x="221" y="181" width="1" height="4" fill="#8b0000"/>
<rect x="220" y="181" width="1" height="4" fill="#8b0000" opacity="0.6"/>
<rect x="222" y="185" width="1" height="1" fill="#8b0000"/>
<rect x="223" y="185" width="1" height="1" fill="#8b0000" opacity="0.6"/>
<rect x="221" y="185" width="1" height="1" fill="#8b0000" opacity="0.4"/>
<rect x="221" y="186" width="1" height="4" fill="#8b0000"/>
<rect x="220" y="186" width="1" height="4" fill="#8b0000" opacity="0.6"/>
<rect x="219" y="190" width="2" height="1" fill="#8b0000"/>
<rect x="221" y="190" width="1" height="1" fill="#8b0000" opacity="0.5"/>
<rect x="310" y="181" width="1" height="2" fill="#0a48e0"/>
<rect x="312" y="181" width="1" height="2" fill="#0a48e0"/>
<rect x="322" y="181" width="1" height="2" fill="#0a48e0"/>
<rect x="324" y="181" width="1" height="2" fill="#0a48e0"/>
<rect x="314" y="183" width="1" height="5" fill="#0a48e0"/>
<rect x="316" y="183" width="1" height="5" fill="#0a48e0"/>
<rect x="315" y="182" width="1" height="1" fill="#0a48e0"/>
<rect x="315" y="185" width="1" height="1" fill="#0a48e0"/>
<rect x="314" y="182" width="1" height="1" fill="#0a48e0" opacity="0.5"/>
<rect x="316" y="182" width="1" height="1" fill="#0a48e0" opacity="0.5"/>
<rect x="318" y="182" width="1" height="6" fill="#0a48e0"/>
<rect x="319" y="182" width="1" height="1" fill="#0a48e0"/>
<rect x="319" y="184" width="1" height="1" fill="#0a48e0"/>
<rect x="319" y="187" width="1" height="1" fill="#0a48e0"/>
<rect x="320" y="183" width="1" height="1" fill="#0a48e0"/>
<rect x="320" y="185" width="1" height="2" fill="#0a48e0"/>
<rect x="320" y="182" width="1" height="1" fill="#0a48e0" opacity="0.35"/>
<rect x="320" y="184" width="1" height="1" fill="#0a48e0" opacity="0.6"/>
<rect x="320" y="187" width="1" height="1" fill="#0a48e0" opacity="0.35"/>
<rect x="311" y="190" width="2" height="2" fill="#009a00"/>
<rect x="315" y="190" width="2" height="2" fill="#009a00"/>
<rect x="319" y="190" width="2" height="2" fill="#009a00"/>
<rect x="323" y="190" width="2" height="2" fill="#009a00"/>
<rect x="411" y="181" width="1" height="2" fill="#0a48e0"/>
<rect x="413" y="181" width="1" height="2" fill="#0a48e0"/>
<rect x="423" y="181" width="1" height="2" fill="#0a48e0"/>
<rect x="425" y="181" width="1" height="2" fill="#0a48e0"/>
<rect x="415" y="183" width="1" height="5" fill="#0a48e0"/>
<rect x="417" y="183" width="1" height="5" fill="#0a48e0"/>
<rect x="416" y="182" width="1" height="1" fill="#0a48e0"/>
<rect x="416" y="185" width="1" height="1" fill="#0a48e0"/>
<rect x="415" y="182" width="1" height="1" fill="#0a48e0" opacity="0.5"/>
<rect x="417" y="182" width="1" height="1" fill="#0a48e0" opacity="0.5"/>
<rect x="419" y="182" width="1" height="6" fill="#0a48e0"/>
<rect x="420" y="182" width="1" height="1" fill="#0a48e0"/>
<rect x="420" y="184" width="1" height="1" fill="#0a48e0"/>
<rect x="420" y="187" width="1" height="1" fill="#0a48e0"/>
<rect x="421" y="183" width="1" height="1" fill="#0a48e0"/>
<rect x="421" y="185" width="1" height="2" fill="#0a48e0"/>
<rect x="421" y="182" width="1" height="1" fill="#0a48e0" opacity="0.35"/>
<rect x="421" y="184" width="1" height="1" fill="#0a48e0" opacity="0.6"/>
<rect x="421" y="187" width="1" height="1" fill="#0a48e0" opacity="0.35"/>
<rect x="412" y="190" width="2" height="2" fill="#009a00"/>
<rect x="416" y="190" width="2" height="2" fill="#009a00"/>
<rect x="420" y="190" width="2" height="2" fill="#009a00"/>
<rect x="424" y="190" width="2" height="2" fill="#009a00"/>
<rect x="512" y="181" width="1" height="2" fill="#0a48e0"/>
<rect x="514" y="181" width="1" height="2" fill="#0a48e0"/>
<rect x="524" y="181" width="1" height="2" fill="#0a48e0"/>
<rect x="526" y="181" width="1" height="2" fill="#0a48e0"/>
<rect x="516" y="183" width="1" height="5" fill="#0a48e0"/>
<rect x="518" y="183" width="1" height="5" fill="#0a48e0"/>
<rect x="517" y="182" width="1" height="1" fill="#0a48e0"/>
<rect x="517" y="185" width="1" height="1" fill="#0a48e0"/>
<rect x="516" y="182" width="1" height="1" fill="#0a48e0" opacity="0.5"/>
<rect x="518" y="182" width="1" height="1" fill="#0a48e0" opacity="0.5"/>
<rect x="520" y="182" width="1" height="6" fill="#0a48e0"/>
<rect x="521" y="182" width="1" height="1" fill="#0a48e0"/>
<rect x="521" y="184" width="1" height="1" fill="#0a48e0"/>
<rect x="521" y="187" width="1" height="1" fill="#0a48e0"/>
<rect x="522" y="183" width="1" height="1" fill="#0a48e0"/>
<rect x="522" y="185" width="1" height="2" fill="#0a48e0"/>
<rect x="522" y="182" width="1" height="1" fill="#0a48e0" opacity="0.35"/>
<rect x="522" y="184" width="1" height="1" fill="#0a48e0" opacity="0.6"/>
<rect x="522" y="187" width="1" height="1" fill="#0a48e0" opacity="0.35"/>
<rect x="513" y="190" width="2" height="2" fill="#009a00"/>
<rect x="517" y="190" width="2" height="2" fill="#009a00"/>
<rect x="521" y="190" width="2" height="2" fill="#009a00"/>
<rect x="525" y="190" width="2" height="2" fill="#009a00"/>
<rect x="213" y="199" width="2" height="1" fill="#8b0000"/>
<rect x="212" y="199" width="1" height="1" fill="#8b0000" opacity="0.5"/>
<rect x="212" y="200" width="1" height="4" fill="#8b0000"/>
<rect x="213" y="200" width="1" height="4" fill="#8b0000" opacity="0.6"/>
<rect x="211" y="204" width="1" height="1" fill="#8b0000"/>
<rect x="210" y="204" width="1" height="1" fill="#8b0000" opacity="0.6"/>
<rect x="212" y="204" width="1" height="1" fill="#8b0000" opacity="0.4"/>
<rect x="212" y="205" width="1" height="4" fill="#8b0000"/>
<rect x="213" y="205" width="1" height="4" fill="#8b0000" opacity="0.6"/>
<rect x="213" y="209" width="2" height="1" fill="#8b0000"/>
<rect x="212" y="209" width="1" height="1" fill="#8b0000" opacity="0.5"/>
<rect x="219" y="199" width="2" height="1" fill="#8b0000"/>
<rect x="221" y="199" width="1" height="1" fill="#8b0000" opacity="0.5"/>
<rect x="221" y="200" width="1" height="4" fill="#8b0000"/>
<rect x="220" y="200" width="1" height="4" fill="#8b0000" opacity="0.6"/>
<rect x="222" y="204" width="1" height="1" fill="#8b0000"/>
<rect x="223" y="204" width="1" height="1" fill="#8b0000" opacity="0.6"/>
<rect x="221" y="204" width="1" height="1" fill="#8b0000" opacity="0.4"/>
<rect x="221" y="205" width="1" height="4" fill="#8b0000"/>
<rect x="220" y="205" width="1" height="4" fill="#8b0000" opacity="0.6"/>
<rect x="219" y="209" width="2" height="1" fill="#8b0000"/>
<rect x="221" y="209" width="1" height="1" fill="#8b0000" opacity="0.5"/>
<rect x="310" y="200" width="1" height="2" fill="#0a48e0"/>
<rect x="312" y="200" width="1" height="2" fill="#0a48e0"/>
<rect x="322" y="200" width="1" height="2" fill="#0a48e0"/>
<rect x="324" y="200" width="1" height="2" fill="#0a48e0"/>
<rect x="314" y="202" width="1" height="5" fill="#0a48e0"/>
<rect x="316" y="202" width="1" height="5" fill="#0a48e0"/>
<rect x="315" y="201" width="1" height="1" fill="#0a48e0"/>
<rect x="315" y="204" width="1" height="1" fill="#0a48e0"/>
<rect x="314" y="201" width="1" height="1" fill="#0a48e0" opacity="0.5"/>
<rect x="316" y="201" width="1" height="1" fill="#0a48e0" opacity="0.5"/>
<rect x="318" y="201" width="1" height="6" fill="#0a48e0"/>
<rect x="319" y="201" width="1" height="1" fill="#0a48e0"/>
<rect x="319" y="203" width="1" height="1" fill="#0a48e0"/>
<rect x="319" y="206" width="1" height="1" fill="#0a48e0"/>
<rect x="320" y="202" width="1" height="1" fill="#0a48e0"/>
<rect x="320" y="204" width="1" height="2" fill="#0a48e0"/>
<rect x="320" y="201" width="1" height="1" fill="#0a48e0" opacity="0.35"/>
<rect x="320" y="203" width="1" height="1" fill="#0a48e0" opacity="0.6"/>
<rect x="320" y="206" width="1" height="1" fill="#0a48e0" opacity="0.35"/>
<rect x="311" y="209" width="2" height="2" fill="#009a00"/>
<rect x="315" y="209" width="2" height="2" fill="#009a00"/>
<rect x="319" y="209" width="2" height="2" fill="#009a00"/>
<rect x="323" y="209" width="2" height="2" fill="#009a00"/>
<rect x="411" y="200" width="1" height="2" fill="#0a48e0"/>
<rect x="413" y="200" width="1" height="2" fill="#0a48e0"/>
<rect x="423" y="200" width="1" height="2" fill="#0a48e0"/>
<rect x="425" y="200" width="1" height="2" fill="#0a48e0"/>
<rect x="415" y="202" width="1" height="5" fill="#0a48e0"/>
<rect x="417" y="202" width="1" height="5" fill="#0a48e0"/>
<rect x="416" y="201" width="1" height="1" fill="#0a48e0"/>
<rect x="416" y="204" width="1" height="1" fill="#0a48e0"/>
<rect x="415" y="201" width="1" height="1" fill="#0a48e0" opacity="0.5"/>
<rect x="417" y="201" width="1" height="1" fill="#0a48e0" opacity="0.5"/>
<rect x="419" y="201" width="1" height="6" fill="#0a48e0"/>
<rect x="420" y="201" width="1" height="1" fill="#0a48e0"/>
<rect x="420" y="203" width="1" height="1" fill="#0a48e0"/>
<rect x="420" y="206" width="1" height="1" fill="#0a48e0"/>
<rect x="421" y="202" width="1" height="1" fill="#0a48e0"/>
<rect x="421" y="204" width="1" height="2" fill="#0a48e0"/>
<rect x="421" y="201" width="1" height="1" fill="#0a48e0" opacity="0.35"/>
<rect x="421" y="203" width="1" height="1" fill="#0a48e0" opacity="0.6"/>
<rect x="421" y="206" width="1" height="1" fill="#0a48e0" opacity="0.35"/>
<rect x="412" y="209" width="2" height="2" fill="#009a00"/>
<rect x="416" y="209" width="2" height="2" fill="#009a00"/>
<rect x="420" y="209" width="2" height="2" fill="#009a00"/>
<rect x="424" y="209" width="2" height="2" fill="#009a00"/>
<rect x="512" y="200" width="1" height="2" fill="#0a48e0"/>
<rect x="514" y="200" width="1" height="2" fill="#0a48e0"/>
<rect x="524" y="200" width="1" height="2" fill="#0a48e0"/>
<rect x="526" y="200" width="1" height="2" fill="#0a48e0"/>
<rect x="516" y="202" width="1" height="5" fill="#0a48e0"/>
<rect x="518" y="202" width="1" height="5" fill="#0a48e0"/>
<rect x="517" y="201" width="1" height="1" fill="#0a48e0"/>
<rect x="517" y="204" width="1" height="1" fill="#0a48e0"/>
<rect x="516" y="201" width="1" height="1" fill="#0a48e0" opacity="0.5"/>
<rect x="518" y="201" width="1" height="1" fill="#0a48e0" opacity="0.5"/>
<rect x="520" y="201" width="1" height="6" fill="#0a48e0"/>
<rect x="521" y="201" width="1" height="1" fill="#0a48e0"/>
<rect x="521" y="203" width="1" height="1" fill="#0a48e0"/>
<rect x="521" y="206" width="1" height="1" fill="#0a48e0"/>
<rect x="522" y="202" width="1" height="1" fill="#0a48e0"/>
<rect x="522" y="204" width="1" height="2" fill="#0a48e0"/>
<rect x="522" y="201" width="1" height="1" fill="#0a48e0" opacity="0.35"/>
<rect x="522" y="203" width="1" height="1" fill="#0a48e0" opacity="0.6"/>
<rect x="522" y="206" width="1" height="1" fill="#0a48e0" opacity="0.35"/>
<rect x="513" y="209" width="2" height="2" fill="#009a00"/>
<rect x="517" y="209" width="2" height="2" fill="#009a00"/>
<rect x="521" y="209" width="2" height="2" fill="#009a00"/>
<rect x="525" y="209" width="2" height="2" fill="#009a00"/>
<rect x="213" y="218" width="2" height="1" fill="#8b0000"/>
<rect x="212" y="218" width="1" height="1" fill="#8b0000" opacity="0.5"/>
<rect x="212" y="219" width="1" height="4" fill="#8b0000"/>
<rect x="213" y="219" width="1" height="4" fill="#8b0000" opacity="0.6"/>
<rect x="211" y="223" width="1" height="1" fill="#8b0000"/>
<rect x="210" y="223" width="1" height="1" fill="#8b0000" opacity="0.6"/>
<rect x="212" y="223" width="1" height="1" fill="#8b0000" opacity="0.4"/>
<rect x="212" y="224" width="1" height="4" fill="#8b0000"/>
<rect x="213" y="224" width="1" height="4" fill="#8b0000" opacity="0.6"/>
<rect x="213" y="228" width="2" height="1" fill="#8b0000"/>
<rect x="212" y="228" width="1" height="1" fill="#8b0000" opacity="0.5"/>
<rect x="219" y="218" width="2" height="1" fill="#8b0000"/>
<rect x="221" y="218" width="1" height="1" fill="#8b0000" opacity="0.5"/>
<rect x="221" y="219" width="1" height="4" fill="#8b0000"/>
<rect x="220" y="219" width="1" height="4" fill="#8b0000" opacity="0.6"/>
<rect x="222" y="223" width="1" height="1" fill="#8b0000"/>
<rect x="223" y="223" width="1" height="1" fill="#8b0000" opacity="0.6"/>
<rect x="221" y="223" width="1" height="1" fill="#8b0000" opacity="0.4"/>
<rect x="221" y="224" width="1" height="4" fill="#8b0000"/>
<rect x="220" y="224" width="1" height="4" fill="#8b0000" opacity="0.6"/>
<rect x="219" y="228" width="2" height="1" fill="#8b0000"/>
<rect x="221" y="228" width="1" height="1" fill="#8b0000" opacity="0.5"/>
<rect x="310" y="219" width="1" height="2" fill="#0a48e0"/>
<rect x="312" y="219" width="1" height="2" fill="#0a48e0"/>
<rect x="322" y="219" width="1" height="2" fill="#0a48e0"/>
<rect x="324" y="219" width="1" height="2" fill="#0a48e0"/>
<rect x="314" y="221" width="1" height="5" fill="#0a48e0"/>
<rect x="316" y="221" width="1" height="5" fill="#0a48e0"/>
<rect x="315" y="220" width="1" height="1" fill="#0a48e0"/>
<rect x="315" y="223" width="1" height="1" fill="#0a48e0"/>
<rect x="314" y="220" width="1" height="1" fill="#0a48e0" opacity="0.5"/>
<rect x="316" y="220" width="1" height="1" fill="#0a48e0" opacity="0.5"/>
<rect x="318" y="220" width="1" height="6" fill="#0a48e0"/>
<rect x="319" y="220" width="1" height="1" fill="#0a48e0"/>
<rect x="319" y="222" width="1" height="1" fill="#0a48e0"/>
<rect x="319" y="225" width="1" height="1" fill="#0a48e0"/>
<rect x="320" y="221" width="1" height="1" fill="#0a48e0"/>
<rect x="320" y="223" width="1" height="2" fill="#0a48e0"/>
<rect x="320" y="220" width="1" height="1" fill="#0a48e0" opacity="0.35"/>
<rect x="320" y="222" width="1" height="1" fill="#0a48e0" opacity="0.6"/>
<rect x="320" y="225" width="1" height="1" fill="#0a48e0" opacity="0.35"/>
<rect x="311" y="228" width="2" height="2" fill="#009a00"/>
<rect x="315" y="228" width="2" height="2" fill="#009a00"/>
<rect x="319" y="228" width="2" height="2" fill="#009a00"/>
<rect x="323" y="228" width="2" height="2" fill="#009a00"/>
<rect x="411" y="219" width="1" height="2" fill="#0a48e0"/>
<rect x="413" y="219" width="1" height="2" fill="#0a48e0"/>
<rect x="423" y="219" width="1" height="2" fill="#0a48e0"/>
<rect x="425" y="219" width="1" height="2" fill="#0a48e0"/>
<rect x="415" y="221" width="1" height="5" fill="#0a48e0"/>
<rect x="417" y="221" width="1" height="5" fill="#0a48e0"/>
<rect x="416" y="220" width="1" height="1" fill="#0a48e0"/>
<rect x="416" y="223" width="1" height="1" fill="#0a48e0"/>
<rect x="415" y="220" width="1" height="1" fill="#0a48e0" opacity="0.5"/>
<rect x="417" y="220" width="1" height="1" fill="#0a48e0" opacity="0.5"/>
<rect x="419" y="220" width="1" height="6" fill="#0a48e0"/>
<rect x="420" y="220" width="1" height="1" fill="#0a48e0"/>
<rect x="420" y="222" width="1" height="1" fill="#0a48e0"/>
<rect x="420" y="225" width="1" height="1" fill="#0a48e0"/>
<rect x="421" y="221" width="1" height="1" fill="#0a48e0"/>
<rect x="421" y="223" width="1" height="2" fill="#0a48e0"/>
<rect x="421" y="220" width="1" height="1" fill="#0a48e0" opacity="0.35"/>
<rect x="421" y="222" width="1" height="1" fill="#0a48e0" opacity="0.6"/>
<rect x="421" y="225" width="1" height="1" fill="#0a48e0" opacity="0.35"/>
<rect x="412" y="228" width="2" height="2" fill="#009a00"/>
<rect x="416" y="228" width="2" height="2" fill="#009a00"/>
<rect x="420" y="228" width="2" height="2" fill="#009a00"/>
<rect x="424" y="228" width="2" height="2" fill="#009a00"/>
<rect x="512" y="219" width="1" height="2" fill="#0a48e0"/>
<rect x="514" y="219" width="1" height="2" fill="#0a48e0"/>
<rect x="524" y="219" width="1" height="2" fill="#0a48e0"/>
<rect x="526" y="219" width="1" height="2" fill="#0a48e0"/>
<rect x="516" y="221" width="1" height="5" fill="#0a48e0"/>
<rect x="518" y="221" width="1" height="5" fill="#0a48e0"/>
<rect x="517" y="220" width="1" height="1" fill="#0a48e0"/>
<rect x="517" y="223" width="1" height="1" fill="#0a48e0"/>
<rect x="516" y="220" width="1" height="1" fill="#0a48e0" opacity="0.5"/>
<rect x="518" y="220" width="1" height="1" fill="#0a48e0" opacity="0.5"/>
<rect x="520" y="220" width="1" height="6" fill="#0a48e0"/>
<rect x="521" y="220" width="1" height="1" fill="#0a48e0"/>
<rect x="521" y="222" width="1" height="1" fill="#0a48e0"/>
<rect x="521" y="225" width="1" height="1" fill="#0a48e0"/>
<rect x="522" y="221" width="1" height="1" fill="#0a48e0"/>
<rect x="522" y="223" width="1" height="2" fill="#0a48e0"/>
<rect x="522" y="220" width="1" height="1" fill="#0a48e0" opacity="0.35"/>
<rect x="522" y="222" width="1" height="1" fill="#0a48e0" opacity="0.6"/>
<rect x="522" y="225" width="1" height="1" fill="#0a48e0" opacity="0.35"/>
<rect x="513" y="228" width="2" height="2" fill="#009a00"/>
<rect x="517" y="228" width="2" height="2" fill="#009a00"/>
<rect x="521" y="228" width="2" height="2" fill="#009a00"/>
<rect x="525" y="228" width="2" height="2" fill="#009a00"/>
<rect x="213" y="237" width="2" height="1" fill="#8b0000"/>
<rect x="212" y="237" width="1" height="1" fill="#8b0000" opacity="0.5"/>
<rect x="212" y="238" width="1" height="4" fill="#8b0000"/>
<rect x="213" y="238" width="1" height="4" fill="#8b0000" opacity="0.6"/>
<rect x="211" y="242" width="1" height="1" fill="#8b0000"/>
<rect x="210" y="242" width="1" height="1" fill="#8b0000" opacity="0.6"/>
<rect x="212" y="242" width="1" height="1" fill="#8b0000" opacity="0.4"/>
<rect x="212" y="243" width="1" height="4" fill="#8b0000"/>
<rect x="213" y="243" width="1" height="4" fill="#8b0000" opacity="0.6"/>
<rect x="213" y="247" width="2" height="1" fill="#8b0000"/>
<rect x="212" y="247" width="1" height="1" fill="#8b0000" opacity="0.5"/>
<rect x="219" y="237" width="2" height="1" fill="#8b0000"/>
<rect x="221" y="237" width="1" height="1" fill="#8b0000" opacity="0.5"/>
<rect x="221" y="238" width="1" height="4" fill="#8b0000"/>
<rect x="220" y="238" width="1" height="4" fill="#8b0000" opacity="0.6"/>
<rect x="222" y="242" width="1" height="1" fill="#8b0000"/>
<rect x="223" y="242" width="1" height="1" fill="#8b0000" opacity="0.6"/>
<rect x="221" y="242" width="1" height="1" fill="#8b0000" opacity="0.4"/>
<rect x="221" y="243" width="1" height="4" fill="#8b0000"/>
<rect x="220" y="243" width="1" height="4" fill="#8b0000" opacity="0.6"/>
<rect x="219" y="247" width="2" height="1" fill="#8b0000"/>
<rect x="221" y="247" width="1" height="1" fill="#8b0000" opacity="0.5"/>
<rect x="310" y="238" width="1" height="2" fill="#0a48e0"/>
<rect x="312" y="238" width="1" height="2" fill="#0a48e0"/>
<rect x="322" y="238" width="1" height="2" fill="#0a48e0"/>
<rect x="324" y="238" width="1" height="2" fill="#0a48e0"/>
<rect x="314" y="240" width="1" height="5" fill="#0a48e0"/>
<rect x="316" y="240" width="1" height="5" fill="#0a48e0"/>
<rect x="315" y="239" width="1" height="1" fill="#0a48e0"/>
<rect x="315" y="242" width="1" height="1" fill="#0a48e0"/>
<rect x="314" y="239" width="1" height="1" fill="#0a48e0" opacity="0.5"/>
<rect x="316" y="239" width="1" height="1" fill="#0a48e0" opacity="0.5"/>
<rect x="318" y="239" width="1" height="6" fill="#0a48e0"/>
<rect x="319" y="239" width="1" height="1" fill="#0a48e0"/>
<rect x="319" y="241" width="1" height="1" fill="#0a48e0"/>
<rect x="319" y="244" width="1" height="1" fill="#0a48e0"/>
<rect x="320" y="240" width="1" height="1" fill="#0a48e0"/>
<rect x="320" y="242" width="1" height="2" fill="#0a48e0"/>
<rect x="320" y="239" width="1" height="1" fill="#0a48e0" opacity="0.35"/>
<rect x="320" y="241" width="1" height="1" fill="#0a48e0" opacity="0.6"/>
<rect x="320" y="244" width="1" height="1" fill="#0a48e0" opacity="0.35"/>
<rect x="311" y="247" width="2" height="2" fill="#009a00"/>
<rect x="315" y="247" width="2" height="2" fill="#009a00"/>
<rect x="319" y="247" width="2" height="2" fill="#009a00"/>
<rect x="323" y="247" width="2" height="2" fill="#009a00"/>
<rect x="411" y="238" width="1" height="2" fill="#0a48e0"/>
<rect x="413" y="238" width="1" height="2" fill="#0a48e0"/>
<rect x="423" y="238" width="1" height="2" fill="#0a48e0"/>
<rect x="425" y="238" width="1" height="2" fill="#0a48e0"/>
<rect x="415" y="240" width="1" height="5" fill="#0a48e0"/>
<rect x="417" y="240" width="1" height="5" fill="#0a48e0"/>
<rect x="416" y="239" width="1" height="1" fill="#0a48e0"/>
<rect x="416" y="242" width="1" height="1" fill="#0a48e0"/>
<rect x="415" y="239" width="1" height="1" fill="#0a48e0" opacity="0.5"/>
<rect x="417" y="239" width="1" height="1" fill="#0a48e0" opacity="0.5"/>
<rect x="419" y="239" width="1" height="6" fill="#0a48e0"/>
<rect x="420" y="239" width="1" height="1" fill="#0a48e0"/>
<rect x="420" y="241" width="1" height="1" fill="#0a48e0"/>
<rect x="420" y="244" width="1" height="1" fill="#0a48e0"/>
<rect x="421" y="240" width="1" height="1" fill="#0a48e0"/>
<rect x="421" y="242" width="1" height="2" fill="#0a48e0"/>
<rect x="421" y="239" width="1" height="1" fill="#0a48e0" opacity="0.35"/>
<rect x="421" y="241" width="1" height="1" fill="#0a48e0" opacity="0.6"/>
<rect x="421" y="244" width="1" height="1" fill="#0a48e0" opacity="0.35"/>
<rect x="412" y="247" width="2" height="2" fill="#009a00"/>
<rect x="416" y="247" width="2" height="2" fill="#009a00"/>
<rect x="420" y="247" width="2" height="2" fill="#009a00"/>
<rect x="424" y="247" width="2" height="2" fill="#009a00"/>
<rect x="512" y="238" width="1" height="2" fill="#0a48e0"/>
<rect x="514" y="238" width="1" height="2" fill="#0a48e0"/>
<rect x="524" y="238" width="1" height="2" fill="#0a48e0"/>
<rect x="526" y="238" width="1" height="2" fill="#0a48e0"/>
<rect x="516" y="240" width="1" height="5" fill="#0a48e0"/>
<rect x="518" y="240" width="1" height="5" fill="#0a48e0"/>
<rect x="517" y="239" width="1" height="1" fill="#0a48e0"/>
<rect x="517" y="242" width="1" height="1" fill="#0a48e0"/>
<rect x="516" y="239" width="1" height="1" fill="#0a48e0" opacity="0.5"/>
<rect x="518" y="239" width="1" height="1" fill="#0a48e0" opacity="0.5"/>
<rect x="520" y="239" width="1" height="6" fill="#0a48e0"/>
<rect x="521" y="239" width="1" height="1" fill="#0a48e0"/>
<rect x="521" y="241" width="1" height="1" fill="#0a48e0"/>
<rect x="521" y="244" width="1" height="1" fill="#0a48e0"/>
<rect x="522" y="240" width="1" height="1" fill="#0a48e0"/>
<rect x="522" y="242" width="1" height="2" fill="#0a48e0"/>
<rect x="522" y="239" width="1" height="1" fill="#0a48e0" opacity="0.35"/>
<rect x="522" y="241" width="1" height="1" fill="#0a48e0" opacity="0.6"/>
<rect x="522" y="244" width="1" height="1" fill="#0a48e0" opacity="0.35"/>
<rect x="513" y="247" width="2" height="2" fill="#009a00"/>
<rect x="517" y="247" width="2" height="2" fill="#009a00"/>
<rect x="521" y="247" width="2" height="2" fill="#009a00"/>
<rect x="525" y="247" width="2" height="2" fill="#009a00"/>
<rect x="213" y="256" width="2" height="1" fill="#8b0000"/>
<rect x="212" y="256" width="1" height="1" fill="#8b0000" opacity="0.5"/>
<rect x="212" y="257" width="1" height="4" fill="#8b0000"/>
<rect x="213" y="257" width="1" height="4" fill="#8b0000" opacity="0.6"/>
<rect x="211" y="261" width="1" height="1" fill="#8b0000"/>
<rect x="210" y="261" width="1" height="1" fill="#8b0000" opacity="0.6"/>
<rect x="212" y="261" width="1" height="1" fill="#8b0000" opacity="0.4"/>
<rect x="212" y="262" width="1" height="4" fill="#8b0000"/>
<rect x="213" y="262" width="1" height="4" fill="#8b0000" opacity="0.6"/>
<rect x="213" y="266" width="2" height="1" fill="#8b0000"/>
<rect x="212" y="266" width="1" height="1" fill="#8b0000" opacity="0.5"/>
<rect x="219" y="256" width="2" height="1" fill="#8b0000"/>
<rect x="221" y="256" width="1" height="1" fill="#8b0000" opacity="0.5"/>
<rect x="221" y="257" width="1" height="4" fill="#8b0000"/>
<rect x="220" y="257" width="1" height="4" fill="#8b0000" opacity="0.6"/>
<rect x="222" y="261" width="1" height="1" fill="#8b0000"/>
<rect x="223" y="261" width="1" height="1" fill="#8b0000" opacity="0.6"/>
<rect x="221" y="261" width="1" height="1" fill="#8b0000" opacity="0.4"/>
<rect x="221" y="262" width="1" height="4" fill="#8b0000"/>
<rect x="220" y="262" width="1" height="4" fill="#8b0000" opacity="0.6"/>
<rect x="219" y="266" width="2" height="1" fill="#8b0000"/>
<rect x="221" y="266" width="1" height="1" fill="#8b0000" opacity="0.5"/>
<rect x="310" y="257" width="1" height="2" fill="#0a48e0"/>
<rect x="312" y="257" width="1" height="2" fill="#0a48e0"/>
<rect x="322" y="257" width="1" height="2" fill="#0a48e0"/>
<rect x="324" y="257" width="1" height="2" fill="#0a48e0"/>
<rect x="314" y="259" width="1" height="5" fill="#0a48e0"/>
<rect x="316" y="259" width="1" height="5" fill="#0a48e0"/>
<rect x="315" y="258" width="1" height="1" fill="#0a48e0"/>
<rect x="315" y="261" width="1" height="1" fill="#0a48e0"/>
<rect x="314" y="258" width="1" height="1" fill="#0a48e0" opacity="0.5"/>
<rect x="316" y="258" width="1" height="1" fill="#0a48e0" opacity="0.5"/>
<rect x="318" y="258" width="1" height="6" fill="#0a48e0"/>
<rect x="319" y="258" width="1" height="1" fill="#0a48e0"/>
<rect x="319" y="260" width="1" height="1" fill="#0a48e0"/>
<rect x="319" y="263" width="1" height="1" fill="#0a48e0"/>
<rect x="320" y="259" width="1" height="1" fill="#0a48e0"/>
<rect x="320" y="261" width="1" height="2" fill="#0a48e0"/>
<rect x="320" y="258" width="1" height="1" fill="#0a48e0" opacity="0.35"/>
<rect x="320" y="260" width="1" height="1" fill="#0a48e0" opacity="0.6"/>
<rect x="320" y="263" width="1" height="1" fill="#0a48e0" opacity="0.35"/>
<rect x="311" y="266" width="2" height="2" fill="#009a00"/>
<rect x="315" y="266" width="2" height="2" fill="#009a00"/>
<rect x="319" y="266" width="2" height="2" fill="#009a00"/>
<rect x="323" y="266" width="2" height="2" fill="#009a00"/>
<rect x="411" y="257" width="1" height="2" fill="#0a48e0"/>
<rect x="413" y="257" width="1" height="2" fill="#0a48e0"/>
<rect x="423" y="257" width="1" height="2" fill="#0a48e0"/>
<rect x="425" y="257" width="1" height="2" fill="#0a48e0"/>
<rect x="415" y="259" width="1" height="5" fill="#0a48e0"/>
<rect x="417" y="259" width="1" height="5" fill="#0a48e0"/>
<rect x="416" y="258" width="1" height="1" fill="#0a48e0"/>
<rect x="416" y="261" width="1" height="1" fill="#0a48e0"/>
<rect x="415" y="258" width="1" height="1" fill="#0a48e0" opacity="0.5"/>
<rect x="417" y="258" width="1" height="1" fill="#0a48e0" opacity="0.5"/>
<rect x="419" y="258" width="1" height="6" fill="#0a48e0"/>
<rect x="420" y="258" width="1" height="1" fill="#0a48e0"/>
<rect x="420" y="260" width="1" height="1" fill="#0a48e0"/>
<rect x="420" y="263" width="1" height="1" fill="#0a48e0"/>
<rect x="421" y="259" width="1" height="1" fill="#0a48e0"/>
<rect x="421" y="261" width="1" height="2" fill="#0a48e0"/>
<rect x="421" y="258" width="1" height="1" fill="#0a48e0" opacity="0.35"/>
<rect x="421" y="260" width="1" height="1" fill="#0a48e0" opacity="0.6"/>
<rect x="421" y="263" width="1" height="1" fill="#0a48e0" opacity="0.35"/>
<rect x="412" y="266" width="2" height="2" fill="#009a00"/>
<rect x="416" y="266" width="2" height="2" fill="#009a00"/>
<rect x="420" y="266" width="2" height="2" fill="#009a00"/>
<rect x="424" y="266" width="2" height="2" fill="#009a00"/>
<rect x="512" y="257" width="1" height="2" fill="#0a48e0"/>
<rect x="514" y="257" width="1" height="2" fill="#0a48e0"/>
<rect x="524" y="257" width="1" height="2" fill="#0a48e0"/>
<rect x="526" y="257" width="1" height="2" fill="#0a48e0"/>
<rect x="516" y="259" width="1" height="5" fill="#0a48e0"/>
<rect x="518" y="259" width="1" height="5" fill="#0a48e0"/>
<rect x="517" y="258" width="1" height="1" fill="#0a48e0"/>
<rect x="517" y="261" width="1" height="1" fill="#0a48e0"/>
<rect x="516" y="258" width="1" height="1" fill="#0a48e0" opacity="0.5"/>
<rect x="518" y="258" width="1" height="1" fill="#0a48e0" opacity="0.5"/>
<rect x="520" y="258" width="1" height="6" fill="#0a48e0"/>
<rect x="521" y="258" width="1" height="1" fill="#0a48e0"/>
<rect x="521" y="260" width="1" height="1" fill="#0a48e0"/>
<rect x="521" y="263" width="1" height="1" fill="#0a48e0"/>
<rect x="522" y="259" width="1" height="1" fill="#0a48e0"/>
<rect x="522" y="261" width="1" height="2" fill="#0a48e0"/>
<rect x="522" y="258" width="1" height="1" fill="#0a48e0" opacity="0.35"/>
<rect x="522" y="260" width="1" height="1" fill="#0a48e0" opacity="0.6"/>
<rect x="522" y="263" width="1" height="1" fill="#0a48e0" opacity="0.35"/>
<rect x="513" y="266" width="2" height="2" fill="#009a00"/>
<rect x="517" y="266" width="2" height="2" fill="#009a00"/>
<rect x="521" y="266" width="2" height="2" fill="#009a00"/>
<rect x="525" y="266" width="2" height="2" fill="#009a00"/>
<rect x="213" y="275" width="2" height="1" fill="#8b0000"/>
<rect x="212" y="275" width="1" height="1" fill="#8b0000" opacity="0.5"/>
<rect x="212" y="276" width="1" height="4" fill="#8b0000"/>
<rect x="213" y="276" width="1" height="4" fill="#8b0000" opacity="0.6"/>
<rect x="211" y="280" width="1" height="1" fill="#8b0000"/>
<rect x="210" y="280" width="1" height="1" fill="#8b0000" opacity="0.6"/>
<rect x="212" y="280" width="1" height="1" fill="#8b0000" opacity="0.4"/>
<rect x="212" y="281" width="1" height="4" fill="#8b0000"/>
<rect x="213" y="281" width="1" height="4" fill="#8b0000" opacity="0.6"/>
<rect x="213" y="285" width="2" height="1" fill="#8b0000"/>
<rect x="212" y="285" width="1" height="1" fill="#8b0000" opacity="0.5"/>
<rect x="219" y="275" width="2" height="1" fill="#8b0000"/>
<rect x="221" y="275" width="1" height="1" fill="#8b0000" opacity="0.5"/>
<rect x="221" y="276" width="1" height="4" fill="#8b0000"/>
<rect x="220" y="276" width="1" height="4" fill="#8b0000" opacity="0.6"/>
<rect x="222" y="280" width="1" height="1" fill="#8b0000"/>
<rect x="223" y="280" width="1" height="1" fill="#8b0000" opacity="0.6"/>
<rect x="221" y="280" width="1" height="1" fill="#8b0000" opacity="0.4"/>
<rect x="221" y="281" width="1" height="4" fill="#8b0000"/>
<rect x="220" y="281" width="1" height="4" fill="#8b0000" opacity="0.6"/>
<rect x="219" y="285" width="2" height="1" fill="#8b0000"/>
<rect x="221" y="285" width="1" height="1" fill="#8b0000" opacity="0.5"/>
<rect x="310" y="276" width="1" height="2" fill="#0a48e0"/>
<rect x="312" y="276" width="1" height="2" fill="#0a48e0"/>
<rect x="322" y="276" width="1" height="2" fill="#0a48e0"/>
<rect x="324" y="276" width="1" height="2" fill="#0a48e0"/>
<rect x="314" y="278" width="1" height="5" fill="#0a48e0"/>
<rect x="316" y="278" width="1" height="5" fill="#0a48e0"/>
<rect x="315" y="277" width="1" height="1" fill="#0a48e0"/>
<rect x="315" y="280" width="1" height="1" fill="#0a48e0"/>
<rect x="314" y="277" width="1" height="1" fill="#0a48e0" opacity="0.5"/>
<rect x="316" y="277" width="1" height="1" fill="#0a48e0" opacity="0.5"/>
<rect x="318" y="277" width="1" height="6" fill="#0a48e0"/>
<rect x="319" y="277" width="1" height="1" fill="#0a48e0"/>
<rect x="319" y="279" width="1" height="1" fill="#0a48e0"/>
<rect x="319" y="282" width="1" height="1" fill="#0a48e0"/>
<rect x="320" y="278" width="1" height="1" fill="#0a48e0"/>
<rect x="320" y="280" width="1" height="2" fill="#0a48e0"/>
<rect x="320" y="277" width="1" height="1" fill="#0a48e0" opacity="0.35"/>
<rect x="320" y="279" width="1" height="1" fill="#0a48e0" opacity="0.6"/>
<rect x="320" y="282" width="1" height="1" fill="#0a48e0" opacity="0.35"/>
<rect x="311" y="285" width="2" height="2" fill="#009a00"/>
<rect x="315" y="285" width="2" height="2" fill="#009a00"/>
<rect x="319" y="285" width="2" height="2" fill="#009a00"/>
<rect x="323" y="285" width="2" height="2" fill="#009a00"/>
<rect x="411" y="276" width="1" height="2" fill="#0a48e0"/>
<rect x="413" y="276" width="1" height="2" fill="#0a48e0"/>
<rect x="423" y="276" width="1" height="2" fill="#0a48e0"/>
<rect x="425" y="276" width="1" height="2" fill="#0a48e0"/>
<rect x="415" y="278" width="1" height="5" fill="#0a48e0"/>
<rect x="417" y="278" width="1" height="5" fill="#0a48e0"/>
<rect x="416" y="277" width="1" height="1" fill="#0a48e0"/>
<rect x="416" y="280" width="1" height="1" fill="#0a48e0"/>
<rect x="415" y="277" width="1" height="1" fill="#0a48e0" opacity="0.5"/>
<rect x="417" y="277" width="1" height="1" fill="#0a48e0" opacity="0.5"/>
<rect x="419" y="277" width="1" height="6" fill="#0a48e0"/>
<rect x="420" y="277" width="1" height="1" fill="#0a48e0"/>
<rect x="420" y="279" width="1" height="1" fill="#0a48e0"/>
<rect x="420" y="282" width="1" height="1" fill="#0a48e0"/>
<rect x="421" y="278" width="1" height="1" fill="#0a48e0"/>
<rect x="421" y="280" width="1" height="2" fill="#0a48e0"/>
<rect x="421" y="277" width="1" height="1" fill="#0a48e0" opacity="0.35"/>
<rect x="421" y="279" width="1" height="1" fill="#0a48e0" opacity="0.6"/>
<rect x="421" y="282" width="1" height="1" fill="#0a48e0" opacity="0.35"/>
<rect x="412" y="285" width="2" height="2" fill="#009a00"/>
<rect x="416" y="285" width="2" height="2" fill="#009a00"/>
<rect x="420" y="285" width="2" height="2" fill="#009a00"/>
<rect x="424" y="285" width="2" height="2" fill="#009a00"/>
<rect x="512" y="276" width="1" height="2" fill="#0a48e0"/>
<rect x="514" y="276" width="1" height="2" fill="#0a48e0"/>
<rect x="524" y="276" width="1" height="2" fill="#0a48e0"/>
<rect x="526" y="276" width="1" height="2" fill="#0a48e0"/>
<rect x="516" y="278" width="1" height="5" fill="#0a48e0"/>
<rect x="518" y="278" width="1" height="5" fill="#0a48e0"/>
<rect x="517" y="277" width="1" height="1" fill="#0a48e0"/>
<rect x="517" y="280" width="1" height="1" fill="#0a48e0"/>
<rect x="516" y="277" width="1" height="1" fill="#0a48e0" opacity="0.5"/>
<rect x="518" y="277" width="1" height="1" fill="#0a48e0" opacity="0.5"/>
<rect x="520" y="277" width="1" height="6" fill="#0a48e0"/>
<rect x="521" y="277" width="1" height="1" fill="#0a48e0"/>
<rect x="521" y="279" width="1" height="1" fill="#0a48e0"/>
<rect x="521" y="282" width="1" height="1" fill="#0a48e0"/>
<rect x="522" y="278" width="1" height="1" fill="#0a48e0"/>
<rect x="522" y="280" width="1" height="2" fill="#0a48e0"/>
<rect x="522" y="277" width="1" height="1" fill="#0a48e0" opacity="0.35"/>
<rect x="522" y="279" width="1" height="1" fill="#0a48e0" opacity="0.6"/>
<rect x="522" y="282" width="1" height="1" fill="#0a48e0" opacity="0.35"/>
<rect x="513" y="285" width="2" height="2" fill="#009a00"/>
<rect x="517" y="285" width="2" height="2" fill="#009a00"/>
<rect x="521" y="285" width="2" height="2" fill="#009a00"/>
<rect x="525" y="285" width="2" height="2" fill="#009a00"/>
<rect x="213" y="294" width="2" height="1" fill="#8b0000"/>
<rect x="212" y="294" width="1" height="1" fill="#8b0000" opacity="0.5"/>
<rect x="212" y="295" width="1" height="4" fill="#8b0000"/>
<rect x="213" y="295" width="1" height="4" fill="#8b0000" opacity="0.6"/>
<rect x="211" y="299" width="1" height="1" fill="#8b0000"/>
<rect x="210" y="299" width="1" height="1" fill="#8b0000" opacity="0.6"/>
<rect x="212" y="299" width="1" height="1" fill="#8b0000" opacity="0.4"/>
<rect x="212" y="300" width="1" height="4" fill="#8b0000"/>
<rect x="213" y="300" width="1" height="4" fill="#8b0000" opacity="0.6"/>
<rect x="213" y="304" width="2" height="1" fill="#8b0000"/>
<rect x="212" y="304" width="1" height="1" fill="#8b0000" opacity="0.5"/>
<rect x="219" y="294" width="2" height="1" fill="#8b0000"/>
<rect x="221" y="294" width="1" height="1" fill="#8b0000" opacity="0.5"/>
<rect x="221" y="295" width="1" height="4" fill="#8b0000"/>
<rect x="220" y="295" width="1" height="4" fill="#8b0000" opacity="0.6"/>
<rect x="222" y="299" width="1" height="1" fill="#8b0000"/>
<rect x="223" y="299" width="1" height="1" fill="#8b0000" opacity="0.6"/>
<rect x="221" y="299" width="1" height="1" fill="#8b0000" opacity="0.4"/>
<rect x="221" y="300" width="1" height="4" fill="#8b0000"/>
<rect x="220" y="300" width="1" height="4" fill="#8b0000" opacity="0.6"/>
<rect x="219" y="304" width="2" height="1" fill="#8b0000"/>
<rect x="221" y="304" width="1" height="1" fill="#8b0000" opacity="0.5"/>
<rect x="310" y="295" width="1" height="2" fill="#0a48e0"/>
<rect x="312" y="295" width="1" height="2" fill="#0a48e0"/>
<rect x="322" y="295" width="1" height="2" fill="#0a48e0"/>
<rect x="324" y="295" width="1" height="2" fill="#0a48e0"/>
<rect x="314" y="297" width="1" height="5" fill="#0a48e0"/>
<rect x="316" y="297" width="1" height="5" fill="#0a48e0"/>
<rect x="315" y="296" width="1" height="1" fill="#0a48e0"/>
<rect x="315" y="299" width="1" height="1" fill="#0a48e0"/>
<rect x="314" y="296" width="1" height="1" fill="#0a48e0" opacity="0.5"/>
<rect x="316" y="296" width="1" height="1" fill="#0a48e0" opacity="0.5"/>
<rect x="318" y="296" width="1" height="6" fill="#0a48e0"/>
<rect x="319" y="296" width="1" height="1" fill="#0a48e0"/>
<rect x="319" y="298" width="1" height="1" fill="#0a48e0"/>
<rect x="319" y="301" width="1" height="1" fill="#0a48e0"/>
<rect x="320" y="297" width="1" height="1" fill="#0a48e0"/>
<rect x="320" y="299" width="1" height="2" fill="#0a48e0"/>
<rect x="320" y="296" width="1" height="1" fill="#0a48e0" opacity="0.35"/>
<rect x="320" y="298" width="1" height="1" fill="#0a48e0" opacity="0.6"/>
<rect x="320" y="301" width="1" height="1" fill="#0a48e0" opacity="0.35"/>
<rect x="311" y="304" width="2" height="2" fill="#009a00"/>
<rect x="315" y="304" width="2" height="2" fill="#009a00"/>
<rect x="319" y="304" width="2" height="2" fill="#009a00"/>
<rect x="323" y="304" width="2" height="2" fill="#009a00"/>
<rect x="411" y="295" width="1" height="2" fill="#0a48e0"/>
<rect x="413" y="295" width="1" height="2" fill="#0a48e0"/>
<rect x="423" y="295" width="1" height="2" fill="#0a48e0"/>
<rect x="425" y="295" width="1" height="2" fill="#0a48e0"/>
<rect x="415" y="297" width="1" height="5" fill="#0a48e0"/>
<rect x="417" y="297" width="1" height="5" fill="#0a48e0"/>
<rect x="416" y="296" width="1" height="1" fill="#0a48e0"/>
<rect x="416" y="299" width="1" height="1" fill="#0a48e0"/>
<rect x="415" y="296" width="1" height="1" fill="#0a48e0" opacity="0.5"/>
<rect x="417" y="296" width="1" height="1" fill="#0a48e0" opacity="0.5"/>
<rect x="419" y="296" width="1" height="6" fill="#0a48e0"/>
<rect x="420" y="296" width="1" height="1" fill="#0a48e0"/>
<rect x="420" y="298" width="1" height="1" fill="#0a48e0"/>
<rect x="420" y="301" width="1" height="1" fill="#0a48e0"/>
<rect x="421" y="297" width="1" height="1" fill="#0a48e0"/>
<rect x="421" y="299" width="1" height="2" fill="#0a48e0"/>
<rect x="421" y="296" width="1" height="1" fill="#0a48e0" opacity="0.35"/>
<rect x="421" y="298" width="1" height="1" fill="#0a48e0" opacity="0.6"/>
<rect x="421" y="301" width="1" height="1" fill="#0a48e0" opacity="0.35"/>
<rect x="412" y="304" width="2" height="2" fill="#009a00"/>
<rect x="416" y="304" width="2" height="2" fill="#009a00"/>
<rect x="420" y="304" width="2" height="2" fill="#009a00"/>
<rect x="424" y="304" width="2" height="2" fill="#009a00"/>
<rect x="512" y="295" width="1" height="2" fill="#0a48e0"/>
<rect x="514" y="295" width="1" height="2" fill="#0a48e0"/>
<rect x="524" y="295" width="1" height="2" fill="#0a48e0"/>
<rect x="526" y="295" width="1" height="2" fill="#0a48e0"/>
<rect x="516" y="297" width="1" height="5" fill="#0a48e0"/>
<rect x="518" y="297" width="1" height="5" fill="#0a48e0"/>
<rect x="517" y="296" width="1" height="1" fill="#0a48e0"/>
<rect x="517" y="299" width="1" height="1" fill="#0a48e0"/>
<rect x="516" y="296" width="1" height="1" fill="#0a48e0" opacity="0.5"/>
<rect x="518" y="296" width="1" height="1" fill="#0a48e0" opacity="0.5"/>
<rect x="520" y="296" width="1" height="6" fill="#0a48e0"/>
<rect x="521" y="296" width="1" height="1" fill="#0a48e0"/>
<rect x="521" y="298" width="1" height="1" fill="#0a48e0"/>
<rect x="521" y="301" width="1" height="1" fill="#0a48e0"/>
<rect x="522" y="297" width="1" height="1" fill="#0a48e0"/>
<rect x="522" y="299" width="1" height="2" fill="#0a48e0"/>
<rect x="522" y="296" width="1" height="1" fill="#0a48e0" opacity="0.35"/>
<rect x="522" y="298" width="1" height="1" fill="#0a48e0" opacity="0.6"/>
<rect x="522" y="301" width="1" height="1" fill="#0a48e0" opacity="0.35"/>
<rect x="513" y="304" width="2" height="2" fill="#009a00"/>
<rect x="517" y="304" width="2" height="2" fill="#009a00"/>
<rect x="521" y="304" width="2" height="2" fill="#009a00"/>
<rect x="525" y="304" width="2" height="2" fill="#009a00"/>
<rect x="213" y="313" width="2" height="1" fill="#8b0000"/>
<rect x="212" y="313" width="1" height="1" fill="#8b0000" opacity="0.5"/>
<rect x="212" y="314" width="1" height="4" fill="#8b0000"/>
<rect x="213" y="314" width="1" height="4" fill="#8b0000" opacity="0.6"/>
<rect x="211" y="318" width="1" height="1" fill="#8b0000"/>
<rect x="210" y="318" width="1" height="1" fill="#8b0000" opacity="0.6"/>
<rect x="212" y="318" width="1" height="1" fill="#8b0000" opacity="0.4"/>
<rect x="212" y="319" width="1" height="4" fill="#8b0000"/>
<rect x="213" y="319" width="1" height="4" fill="#8b0000" opacity="0.6"/>
<rect x="213" y="323" width="2" height="1" fill="#8b0000"/>
<rect x="212" y="323" width="1" height="1" fill="#8b0000" opacity="0.5"/>
<rect x="219" y="313" width="2" height="1" fill="#8b0000"/>
<rect x="221" y="313" width="1" height="1" fill="#8b0000" opacity="0.5"/>
<rect x="221" y="314" width="1" height="4" fill="#8b0000"/>
<rect x="220" y="314" width="1" height="4" fill="#8b0000" opacity="0.6"/>
<rect x="222" y="318" width="1" height="1" fill="#8b0000"/>
<rect x="223" y="318" width="1" height="1" fill="#8b0000" opacity="0.6"/>
<rect x="221" y="318" width="1" height="1" fill="#8b0000" opacity="0.4"/>
<rect x="221" y="319" width="1" height="4" fill="#8b0000"/>
<rect x="220" y="319" width="1" height="4" fill="#8b0000" opacity="0.6"/>
<rect x="219" y="323" width="2" height="1" fill="#8b0000"/>
<rect x="221" y="323" width="1" height="1" fill="#8b0000" opacity="0.5"/>
<rect x="310" y="314" width="1" height="2" fill="#0a48e0"/>
<rect x="312" y="314" width="1" height="2" fill="#0a48e0"/>
<rect x="322" y="314" width="1" height="2" fill="#0a48e0"/>
<rect x="324" y="314" width="1" height="2" fill="#0a48e0"/>
<rect x="314" y="316" width="1" height="5" fill="#0a48e0"/>
<rect x="316" y="316" width="1" height="5" fill="#0a48e0"/>
<rect x="315" y="315" width="1" height="1" fill="#0a48e0"/>
<rect x="315" y="318" width="1" height="1" fill="#0a48e0"/>
<rect x="314" y="315" width="1" height="1" fill="#0a48e0" opacity="0.5"/>
<rect x="316" y="315" width="1" height="1" fill="#0a48e0" opacity="0.5"/>
<rect x="318" y="315" width="1" height="6" fill="#0a48e0"/>
<rect x="319" y="315" width="1" height="1" fill="#0a48e0"/>
<rect x="319" y="317" width="1" height="1" fill="#0a48e0"/>
<rect x="319" y="320" width="1" height="1" fill="#0a48e0"/>
<rect x="320" y="316" width="1" height="1" fill="#0a48e0"/>
<rect x="320" y="318" width="1" height="2" fill="#0a48e0"/>
<rect x="320" y="315" width="1" height="1" fill="#0a48e0" opacity="0.35"/>
<rect x="320" y="317" width="1" height="1" fill="#0a48e0" opacity="0.6"/>
<rect x="320" y="320" width="1" height="1" fill="#0a48e0" opacity="0.35"/>
<rect x="311" y="323" width="2" height="2" fill="#009a00"/>
<rect x="315" y="323" width="2" height="2" fill="#009a00"/>
<rect x="319" y="323" width="2" height="2" fill="#009a00"/>
<rect x="323" y="323" width="2" height="2" fill="#009a00"/>
<rect x="411" y="314" width="1" height="2" fill="#0a48e0"/>
<rect x="413" y="314" width="1" height="2" fill="#0a48e0"/>
<rect x="423" y="314" width="1" height="2" fill="#0a48e0"/>
<rect x="425" y="314" width="1" height="2" fill="#0a48e0"/>
<rect x="415" y="316" width="1" height="5" fill="#0a48e0"/>
<rect x="417" y="316" width="1" height="5" fill="#0a48e0"/>
<rect x="416" y="315" width="1" height="1" fill="#0a48e0"/>
<rect x="416" y="318" width="1" height="1" fill="#0a48e0"/>
<rect x="415" y="315" width="1" height="1" fill="#0a48e0" opacity="0.5"/>
<rect x="417" y="315" width="1" height="1" fill="#0a48e0" opacity="0.5"/>
<rect x="419" y="315" width="1" height="6" fill="#0a48e0"/>
<rect x="420" y="315" width="1" height="1" fill="#0a48e0"/>
<rect x="420" y="317" width="1" height="1" fill="#0a48e0"/>
<rect x="420" y="320" width="1" height="1" fill="#0a48e0"/>
<rect x="421" y="316" width="1" height="1" fill="#0a48e0"/>
<rect x="421" y="318" width="1" height="2" fill="#0a48e0"/>
<rect x="421" y="315" width="1" height="1" fill="#0a48e0" opacity="0.35"/>
<rect x="421" y="317" width="1" height="1" fill="#0a48e0" opacity="0.6"/>
<rect x="421" y="320" width="1" height="1" fill="#0a48e0" opacity="0.35"/>
<rect x="412" y="323" width="2" height="2" fill="#009a00"/>
<rect x="416" y="323" width="2" height="2" fill="#009a00"/>
<rect x="420" y="323" width="2" height="2" fill="#009a00"/>
<rect x="424" y="323" width="2" height="2" fill="#009a00"/>
<rect x="512" y="314" width="1" height="2" fill="#0a48e0"/>
<rect x="514" y="314" width="1" height="2" fill="#0a48e0"/>
<rect x="524" y="314" width="1" height="2" fill="#0a48e0"/>
<rect x="526" y="314" width="1" height="2" fill="#0a48e0"/>
<rect x="516" y="316" width="1" height="5" fill="#0a48e0"/>
<rect x="518" y="316" width="1" height="5" fill="#0a48e0"/>
<rect x="517" y="315" width="1" height="1" fill="#0a48e0"/>
<rect x="517" y="318" width="1" height="1" fill="#0a48e0"/>
<rect x="516" y="315" width="1" height="1" fill="#0a48e0" opacity="0.5"/>
<rect x="518" y="315" width="1" height="1" fill="#0a48e0" opacity="0.5"/>
<rect x="520" y="315" width="1" height="6" fill="#0a48e0"/>
<rect x="521" y="315" width="1" height="1" fill="#0a48e0"/>
<rect x="521" y="317" width="1" height="1" fill="#0a48e0"/>
<rect x="521" y="320" width="1" height="1" fill="#0a48e0"/>
<rect x="522" y="316" width="1" height="1" fill="#0a48e0"/>
<rect x="522" y="318" width="1" height="2" fill="#0a48e0"/>
<rect x="522" y="315" width="1" height="1" fill="#0a48e0" opacity="0.35"/>
<rect x="522" y="317" width="1" height="1" fill="#0a48e0" opacity="0.6"/>
<rect x="522" y="320" width="1" height="1" fill="#0a48e0" opacity="0.35"/>
<rect x="513" y="323" width="2" height="2" fill="#009a00"/>
<rect x="517" y="323" width="2" height="2" fill="#009a00"/>
<rect x="521" y="323" width="2" height="2" fill="#009a00"/>
<rect x="525" y="323" width="2" height="2" fill="#009a00"/>
<rect x="213" y="332" width="2" height="1" fill="#8b0000"/>
<rect x="212" y="332" width="1" height="1" fill="#8b0000" opacity="0.5"/>
<rect x="212" y="333" width="1" height="4" fill="#8b0000"/>
<rect x="213" y="333" width="1" height="4" fill="#8b0000" opacity="0.6"/>
<rect x="211" y="337" width="1" height="1" fill="#8b0000"/>
<rect x="210" y="337" width="1" height="1" fill="#8b0000" opacity="0.6"/>
<rect x="212" y="337" width="1" height="1" fill="#8b0000" opacity="0.4"/>
<rect x="212" y="338" width="1" height="4" fill="#8b0000"/>
<rect x="213" y="338" width="1" height="4" fill="#8b0000" opacity="0.6"/>
<rect x="213" y="342" width="2" height="1" fill="#8b0000"/>
<rect x="212" y="342" width="1" height="1" fill="#8b0000" opacity="0.5"/>
<rect x="219" y="332" width="2" height="1" fill="#8b0000"/>
<rect x="221" y="332" width="1" height="1" fill="#8b0000" opacity="0.5"/>
<rect x="221" y="333" width="1" height="4" fill="#8b0000"/>
<rect x="220" y="333" width="1" height="4" fill="#8b0000" opacity="0.6"/>
<rect x="222" y="337" width="1" height="1" fill="#8b0000"/>
<rect x="223" y="337" width="1" height="1" fill="#8b0000" opacity="0.6"/>
<rect x="221" y="337" width="1" height="1" fill="#8b0000" opacity="0.4"/>
<rect x="221" y="338" width="1" height="4" fill="#8b0000"/>
<rect x="220" y="338" width="1" height="4" fill="#8b0000" opacity="0.6"/>
<rect x="219" y="342" width="2" height="1" fill="#8b0000"/>
<rect x="221" y="342" width="1" height="1" fill="#8b0000" opacity="0.5"/>
<rect x="310" y="333" width="1" height="2" fill="#0a48e0"/>
<rect x="312" y="333" width="1" height="2" fill="#0a48e0"/>
<rect x="322" y="333" width="1" height="2" fill="#0a48e0"/>
<rect x="324" y="333" width="1" height="2" fill="#0a48e0"/>
<rect x="314" y="335" width="1" height="5" fill="#0a48e0"/>
<rect x="316" y="335" width="1" height="5" fill="#0a48e0"/>
<rect x="315" y="334" width="1" height="1" fill="#0a48e0"/>
<rect x="315" y="337" width="1" height="1" fill="#0a48e0"/>
<rect x="314" y="334" width="1" height="1" fill="#0a48e0" opacity="0.5"/>
<rect x="316" y="334" width="1" height="1" fill="#0a48e0" opacity="0.5"/>
<rect x="318" y="334" width="1" height="6" fill="#0a48e0"/>
<rect x="319" y="334" width="1" height="1" fill="#0a48e0"/>
<rect x="319" y="336" width="1" height="1" fill="#0a48e0"/>
<rect x="319" y="339" width="1" height="1" fill="#0a48e0"/>
<rect x="320" y="335" width="1" height="1" fill="#0a48e0"/>
<rect x="320" y="337" width="1" height="2" fill="#0a48e0"/>
<rect x="320" y="334" width="1" height="1" fill="#0a48e0" opacity="0.35"/>
<rect x="320" y="336" width="1" height="1" fill="#0a48e0" opacity="0.6"/>
<rect x="320" y="339" width="1" height="1" fill="#0a48e0" opacity="0.35"/>
<rect x="311" y="342" width="2" height="2" fill="#009a00"/>
<rect x="315" y="342" width="2" height="2" fill="#009a00"/>
<rect x="319" y="342" width="2" height="2" fill="#009a00"/>
<rect x="323" y="342" width="2" height="2" fill="#009a00"/>
<rect x="411" y="333" width="1" height="2" fill="#0a48e0"/>
<rect x="413" y="333" width="1" height="2" fill="#0a48e0"/>
<rect x="423" y="333" width="1" height="2" fill="#0a48e0"/>
<rect x="425" y="333" width="1" height="2" fill="#0a48e0"/>
<rect x="415" y="335" width="1" height="5" fill="#0a48e0"/>
<rect x="417" y="335" width="1" height="5" fill="#0a48e0"/>
<rect x="416" y="334" width="1" height="1" fill="#0a48e0"/>
<rect x="416" y="337" width="1" height="1" fill="#0a48e0"/>
<rect x="415" y="334" width="1" height="1" fill="#0a48e0" opacity="0.5"/>
<rect x="417" y="334" width="1" height="1" fill="#0a48e0" opacity="0.5"/>
<rect x="419" y="334" width="1" height="6" fill="#0a48e0"/>
<rect x="420" y="334" width="1" height="1" fill="#0a48e0"/>
<rect x="420" y="336" width="1" height="1" fill="#0a48e0"/>
<rect x="420" y="339" width="1" height="1" fill="#0a48e0"/>
<rect x="421" y="335" width="1" height="1" fill="#0a48e0"/>
<rect x="421" y="337" width="1" height="2" fill="#0a48e0"/>
<rect x="421" y="334" width="1" height="1" fill="#0a48e0" opacity="0.35"/>
<rect x="421" y="336" width="1" height="1" fill="#0a48e0" opacity="0.6"/>
<rect x="421" y="339" width="1" height="1" fill="#0a48e0" opacity="0.35"/>
<rect x="412" y="342" width="2" height="2" fill="#009a00"/>
<rect x="416" y="342" width="2" height="2" fill="#009a00"/>
<rect x="420" y="342" width="2" height="2" fill="#009a00"/>
<rect x="424" y="342" width="2" height="2" fill="#009a00"/>
<rect x="512" y="333" width="1" height="2" fill="#0a48e0"/>
<rect x="514" y="333" width="1" height="2" fill="#0a48e0"/>
<rect x="524" y="333" width="1" height="2" fill="#0a48e0"/>
<rect x="526" y="333" width="1" height="2" fill="#0a48e0"/>
<rect x="516" y="335" width="1" height="5" fill="#0a48e0"/>
<rect x="518" y="335" width="1" height="5" fill="#0a48e0"/>
<rect x="517" y="334" width="1" height="1" fill="#0a48e0"/>
<rect x="517" y="337" width="1" height="1" fill="#0a48e0"/>
<rect x="516" y="334" width="1" height="1" fill="#0a48e0" opacity="0.5"/>
<rect x="518" y="334" width="1" height="1" fill="#0a48e0" opacity="0.5"/>
<rect x="520" y="334" width="1" height="6" fill="#0a48e0"/>
<rect x="521" y="334" width="1" height="1" fill="#0a48e0"/>
<rect x="521" y="336" width="1" height="1" fill="#0a48e0"/>
<rect x="521" y="339" width="1" height="1" fill="#0a48e0"/>
<rect x="522" y="335" width="1" height="1" fill="#0a48e0"/>
<rect x="522" y="337" width="1" height="2" fill="#0a48e0"/>
<rect x="522" y="334" width="1" height="1" fill="#0a48e0" opacity="0.35"/>
<rect x="522" y="336" width="1" height="1" fill="#0a48e0" opacity="0.6"/>
<rect x="522" y="339" width="1" height="1" fill="#0a48e0" opacity="0.35"/>
<rect x="513" y="342" width="2" height="2" fill="#009a00"/>
<rect x="517" y="342" width="2" height="2" fill="#009a00"/>
<rect x="521" y="342" width="2" height="2" fill="#009a00"/>
<rect x="525" y="342" width="2" height="2" fill="#009a00"/>
<rect x="213" y="351" width="2" height="1" fill="#8b0000"/>
<rect x="212" y="351" width="1" height="1" fill="#8b0000" opacity="0.5"/>
<rect x="212" y="352" width="1" height="4" fill="#8b0000"/>
<rect x="213" y="352" width="1" height="4" fill="#8b0000" opacity="0.6"/>
<rect x="211" y="356" width="1" height="1" fill="#8b0000"/>
<rect x="210" y="356" width="1" height="1" fill="#8b0000" opacity="0.6"/>
<rect x="212" y="356" width="1" height="1" fill="#8b0000" opacity="0.4"/>
<rect x="212" y="357" width="1" height="4" fill="#8b0000"/>
<rect x="213" y="357" width="1" height="4" fill="#8b0000" opacity="0.6"/>
<rect x="213" y="361" width="2" height="1" fill="#8b0000"/>
<rect x="212" y="361" width="1" height="1" fill="#8b0000" opacity="0.5"/>
<rect x="219" y="351" width="2" height="1" fill="#8b0000"/>
<rect x="221" y="351" width="1" height="1" fill="#8b0000" opacity="0.5"/>
<rect x="221" y="352" width="1" height="4" fill="#8b0000"/>
<rect x="220" y="352" width="1" height="4" fill="#8b0000" opacity="0.6"/>
<rect x="222" y="356" width="1" height="1" fill="#8b0000"/>
<rect x="223" y="356" width="1" height="1" fill="#8b0000" opacity="0.6"/>
<rect x="221" y="356" width="1" height="1" fill="#8b0000" opacity="0.4"/>
<rect x="221" y="357" width="1" height="4" fill="#8b0000"/>
<rect x="220" y="357" width="1" height="4" fill="#8b0000" opacity="0.6"/>
<rect x="219" y="361" width="2" height="1" fill="#8b0000"/>
<rect x="221" y="361" width="1" height="1" fill="#8b0000" opacity="0.5"/>
<rect x="310" y="352" width="1" height="2" fill="#0a48e0"/>
<rect x="312" y="352" width="1" height="2" fill="#0a48e0"/>
<rect x="322" y="352" width="1" height="2" fill="#0a48e0"/>
<rect x="324" y="352" width="1" height="2" fill="#0a48e0"/>
<rect x="314" y="354" width="1" height="5" fill="#0a48e0"/>
<rect x="316" y="354" width="1" height="5" fill="#0a48e0"/>
<rect x="315" y="353" width="1" height="1" fill="#0a48e0"/>
<rect x="315" y="356" width="1" height="1" fill="#0a48e0"/>
<rect x="314" y="353" width="1" height="1" fill="#0a48e0" opacity="0.5"/>
<rect x="316" y="353" width="1" height="1" fill="#0a48e0" opacity="0.5"/>
<rect x="318" y="353" width="1" height="6" fill="#0a48e0"/>
<rect x="319" y="353" width="1" height="1" fill="#0a48e0"/>
<rect x="319" y="355" width="1" height="1" fill="#0a48e0"/>
<rect x="319" y="358" width="1" height="1" fill="#0a48e0"/>
<rect x="320" y="354" width="1" height="1" fill="#0a48e0"/>
<rect x="320" y="356" width="1" height="2" fill="#0a48e0"/>
<rect x="320" y="353" width="1" height="1" fill="#0a48e0" opacity="0.35"/>
<rect x="320" y="355" width="1" height="1" fill="#0a48e0" opacity="0.6"/>
<rect x="320" y="358" width="1" height="1" fill="#0a48e0" opacity="0.35"/>
<rect x="311" y="361" width="2" height="2" fill="#009a00"/>
<rect x="315" y="361" width="2" height="2" fill="#009a00"/>
<rect x="319" y="361" width="2" height="2" fill="#009a00"/>
<rect x="323" y="361" width="2" height="2" fill="#009a00"/>
<rect x="411" y="352" width="1" height="2" fill="#0a48e0"/>
<rect x="413" y="352" width="1" height="2" fill="#0a48e0"/>
<rect x="423" y="352" width="1" height="2" fill="#0a48e0"/>
<rect x="425" y="352" width="1" height="2" fill="#0a48e0"/>
<rect x="415" y="354" width="1" height="5" fill="#0a48e0"/>
<rect x="417" y="354" width="1" height="5" fill="#0a48e0"/>
<rect x="416" y="353" width="1" height="1" fill="#0a48e0"/>
<rect x="416" y="356" width="1" height="1" fill="#0a48e0"/>
<rect x="415" y="353" width="1" height="1" fill="#0a48e0" opacity="0.5"/>
<rect x="417" y="353" width="1" height="1" fill="#0a48e0" opacity="0.5"/>
<rect x="419" y="353" width="1" height="6" fill="#0a48e0"/>
<rect x="420" y="353" width="1" height="1" fill="#0a48e0"/>
<rect x="420" y="355" width="1" height="1" fill="#0a48e0"/>
<rect x="420" y="358" width="1" height="1" fill="#0a48e0"/>
<rect x="421" y="354" width="1" height="1" fill="#0a48e0"/>
<rect x="421" y="356" width="1" height="2" fill="#0a48e0"/>
<rect x="421" y="353" width="1" height="1" fill="#0a48e0" opacity="0.35"/>
<rect x="421" y="355" width="1" height="1" fill="#0a48e0" opacity="0.6"/>
<rect x="421" y="358" width="1" height="1" fill="#0a48e0" opacity="0.35"/>
<rect x="412" y="361" width="2" height="2" fill="#009a00"/>
<rect x="416" y="361" width="2" height="2" fill="#009a00"/>
<rect x="420" y="361" width="2" height="2" fill="#009a00"/>
<rect x="424" y="361" width="2" height="2" fill="#009a00"/>
<rect x="512" y="352" width="1" height="2" fill="#0a48e0"/>
<rect x="514" y="352" width="1" height="2" fill="#0a48e0"/>
<rect x="524" y="352" width="1" height="2" fill="#0a48e0"/>
<rect x="526" y="352" width="1" height="2" fill="#0a48e0"/>
<rect x="516" y="354" width="1" height="5" fill="#0a48e0"/>
<rect x="518" y="354" width="1" height="5" fill="#0a48e0"/>
<rect x="517" y="353" width="1" height="1" fill="#0a48e0"/>
<rect x="517" y="356" width="1" height="1" fill="#0a48e0"/>
<rect x="516" y="353" width="1" height="1" fill="#0a48e0" opacity="0.5"/>
<rect x="518" y="353" width="1" height="1" fill="#0a48e0" opacity="0.5"/>
<rect x="520" y="353" width="1" height="6" fill="#0a48e0"/>
<rect x="521" y="353" width="1" height="1" fill="#0a48e0"/>
<rect x="521" y="355" width="1" height="1" fill="#0a48e0"/>
<rect x="521" y="358" width="1" height="1" fill="#0a48e0"/>
<rect x="522" y="354" width="1" height="1" fill="#0a48e0"/>
<rect x="522" y="356" width="1" height="2" fill="#0a48e0"/>
<rect x="522" y="353" width="1" height="1" fill="#0a48e0" opacity="0.35"/>
<rect x="522" y="355" width="1" height="1" fill="#0a48e0" opacity="0.6"/>
<rect x="522" y="358" width="1" height="1" fill="#0a48e0" opacity="0.35"/>
<rect x="513" y="361" width="2" height="2" fill="#009a00"/>
<rect x="517" y="361" width="2" height="2" fill="#009a00"/>
<rect x="521" y="361" width="2" height="2" fill="#009a00"/>
<rect x="525" y="361" width="2" height="2" fill="#009a00"/>
<rect x="213" y="370" width="2" height="1" fill="#8b0000"/>
<rect x="212" y="370" width="1" height="1" fill="#8b0000" opacity="0.5"/>
<rect x="212" y="371" width="1" height="4" fill="#8b0000"/>
<rect x="213" y="371" width="1" height="4" fill="#8b0000" opacity="0.6"/>
<rect x="211" y="375" width="1" height="1" fill="#8b0000"/>
<rect x="210" y="375" width="1" height="1" fill="#8b0000" opacity="0.6"/>
<rect x="212" y="375" width="1" height="1" fill="#8b0000" opacity="0.4"/>
<rect x="212" y="376" width="1" height="4" fill="#8b0000"/>
<rect x="213" y="376" width="1" height="4" fill="#8b0000" opacity="0.6"/>
<rect x="213" y="380" width="2" height="1" fill="#8b0000"/>
<rect x="212" y="380" width="1" height="1" fill="#8b0000" opacity="0.5"/>
<rect x="219" y="370" width="2" height="1" fill="#8b0000"/>
<rect x="221" y="370" width="1" height="1" fill="#8b0000" opacity="0.5"/>
<rect x="221" y="371" width="1" height="4" fill="#8b0000"/>
<rect x="220" y="371" width="1" height="4" fill="#8b0000" opacity="0.6"/>
<rect x="222" y="375" width="1" height="1" fill="#8b0000"/>
<rect x="223" y="375" width="1" height="1" fill="#8b0000" opacity="0.6"/>
<rect x="221" y="375" width="1" height="1" fill="#8b0000" opacity="0.4"/>
<rect x="221" y="376" width="1" height="4" fill="#8b0000"/>
<rect x="220" y="376" width="1" height="4" fill="#8b0000" opacity="0.6"/>
<rect x="219" y="380" width="2" height="1" fill="#8b0000"/>
<rect x="221" y="380" width="1" height="1" fill="#8b0000" opacity="0.5"/>
<rect x="310" y="371" width="1" height="2" fill="#0a48e0"/>
<rect x="312" y="371" width="1" height="2" fill="#0a48e0"/>
<rect x="322" y="371" width="1" height="2" fill="#0a48e0"/>
<rect x="324" y="371" width="1" height="2" fill="#0a48e0"/>
<rect x="314" y="373" width="1" height="5" fill="#0a48e0"/>
<rect x="316" y="373" width="1" height="5" fill="#0a48e0"/>
<rect x="315" y="372" width="1" height="1" fill="#0a48e0"/>
<rect x="315" y="375" width="1" height="1" fill="#0a48e0"/>
<rect x="314" y="372" width="1" height="1" fill="#0a48e0" opacity="0.5"/>
<rect x="316" y="372" width="1" height="1" fill="#0a48e0" opacity="0.5"/>
<rect x="318" y="372" width="1" height="6" fill="#0a48e0"/>
<rect x="319" y="372" width="1" height="1" fill="#0a48e0"/>
<rect x="319" y="374" width="1" height="1" fill="#0a48e0"/>
<rect x="319" y="377" width="1" height="1" fill="#0a48e0"/>
<rect x="320" y="373" width="1" height="1" fill="#0a48e0"/>
<rect x="320" y="375" width="1" height="2" fill="#0a48e0"/>
<rect x="320" y="372" width="1" height="1" fill="#0a48e0" opacity="0.35"/>
<rect x="320" y="374" width="1" height="1" fill="#0a48e0" opacity="0.6"/>
<rect x="320" y="377" width="1" height="1" fill="#0a48e0" opacity="0.35"/>
<rect x="311" y="380" width="2" height="2" fill="#009a00"/>
<rect x="315" y="380" width="2" height="2" fill="#009a00"/>
<rect x="319" y="380" width="2" height="2" fill="#009a00"/>
<rect x="323" y="380" width="2" height="2" fill="#009a00"/>
<rect x="411" y="371" width="1" height="2" fill="#0a48e0"/>
<rect x="413" y="371" width="1" height="2" fill="#0a48e0"/>
<rect x="423" y="371" width="1" height="2" fill="#0a48e0"/>
<rect x="425" y="371" width="1" height="2" fill="#0a48e0"/>
<rect x="415" y="373" width="1" height="5" fill="#0a48e0"/>
<rect x="417" y="373" width="1" height="5" fill="#0a48e0"/>
<rect x="416" y="372" width="1" height="1" fill="#0a48e0"/>
<rect x="416" y="375" width="1" height="1" fill="#0a48e0"/>
<rect x="415" y="372" width="1" height="1" fill="#0a48e0" opacity="0.5"/>
<rect x="417" y="372" width="1" height="1" fill="#0a48e0" opacity="0.5"/>
<rect x="419" y="372" width="1" height="6" fill="#0a48e0"/>
<rect x="420" y="372" width="1" height="1" fill="#0a48e0"/>
<rect x="420" y="374" width="1" height="1" fill="#0a48e0"/>
<rect x="420" y="377" width="1" height="1" fill="#0a48e0"/>
<rect x="421" y="373" width="1" height="1" fill="#0a48e0"/>
<rect x="421" y="375" width="1" height="2" fill="#0a48e0"/>
<rect x="421" y="372" width="1" height="1" fill="#0a48e0" opacity="0.35"/>
<rect x="421" y="374" width="1" height="1" fill="#0a48e0" opacity="0.6"/>
<rect x="421" y="377" width="1" height="1" fill="#0a48e0" opacity="0.35"/>
<rect x="412" y="380" width="2" height="2" fill="#009a00"/>
<rect x="416" y="380" width="2" height="2" fill="#009a00"/>
<rect x="420" y="380" width="2" height="2" fill="#009a00"/>
<rect x="424" y="380" width="2" height="2" fill="#009a00"/>
<rect x="512" y="371" width="1" height="2" fill="#0a48e0"/>
<rect x="514" y="371" width="1" height="2" fill="#0a48e0"/>
<rect x="524" y="371" width="1" height="2" fill="#0a48e0"/>
<rect x="526" y="371" width="1" height="2" fill="#0a48e0"/>
<rect x="516" y="373" width="1" height="5" fill="#0a48e0"/>
<rect x="518" y="373" width="1" height="5" fill="#0a48e0"/>
<rect x="517" y="372" width="1" height="1" fill="#0a48e0"/>
<rect x="517" y="375" width="1" height="1" fill="#0a48e0"/>
<rect x="516" y="372" width="1" height="1" fill="#0a48e0" opacity="0.5"/>
<rect x="518" y="372" width="1" height="1" fill="#0a48e0" opacity="0.5"/>
<rect x="520" y="372" width="1" height="6" fill="#0a48e0"/>
<rect x="521" y="372" width="1" height="1" fill="#0a48e0"/>
<rect x="521" y="374" width="1" height="1" fill="#0a48e0"/>
<rect x="521" y="377" width="1" height="1" fill="#0a48e0"/>
<rect x="522" y="373" width="1" height="1" fill="#0a48e0"/>
<rect x="522" y="375" width="1" height="2" fill="#0a48e0"/>
<rect x="522" y="372" width="1" height="1" fill="#0a48e0" opacity="0.35"/>
<rect x="522" y="374" width="1" height="1" fill="#0a48e0" opacity="0.6"/>
<rect x="522" y="377" width="1" height="1" fill="#0a48e0" opacity="0.35"/>
<rect x="513" y="380" width="2" height="2" fill="#009a00"/>
<rect x="517" y="380" width="2" height="2" fill="#009a00"/>
<rect x="521" y="380" width="2" height="2" fill="#009a00"/>
<rect x="525" y="380" width="2" height="2" fill="#009a00"/>
<rect x="7" y="387" width="11" height="134" fill="#f5f5f5"/>
<rect x="8" y="388" width="9" height="132" fill="#c6c6c6"/>
<rect x="8" y="388" width="8" height="131" fill="#fcfcfc"/>
<rect x="9" y="388" width="7" height="131" fill="#ececec"/>
<rect x="12" y="392" width="1" height="1" fill="#000"/>
<rect x="11" y="393" width="3" height="1" fill="#000"/>
<rect x="10" y="394" width="5" height="1" fill="#000"/>
<rect x="9" y="395" width="7" height="1" fill="#000"/>
<rect x="24" y="389" width="2" height="1" fill="#8b0000"/>
<rect x="23" y="389" width="1" height="1" fill="#8b0000" opacity="0.5"/>
<rect x="23" y="390" width="1" height="4" fill="#8b0000"/>
<rect x="24" y="390" width="1" height="4" fill="#8b0000" opacity="0.6"/>
<rect x="22" y="394" width="1" height="1" fill="#8b0000"/>
<rect x="21" y="394" width="1" height="1" fill="#8b0000" opacity="0.6"/>
<rect x="23" y="394" width="1" height="1" fill="#8b0000" opacity="0.4"/>
<rect x="23" y="395" width="1" height="4" fill="#8b0000"/>
<rect x="24" y="395" width="1" height="4" fill="#8b0000" opacity="0.6"/>
<rect x="24" y="399" width="2" height="1" fill="#8b0000"/>
<rect x="23" y="399" width="1" height="1" fill="#8b0000" opacity="0.5"/>
<rect x="30" y="389" width="2" height="1" fill="#8b0000"/>
<rect x="32" y="389" width="1" height="1" fill="#8b0000" opacity="0.5"/>
<rect x="32" y="390" width="1" height="4" fill="#8b0000"/>
<rect x="31" y="390" width="1" height="4" fill="#8b0000" opacity="0.6"/>
<rect x="33" y="394" width="1" height="1" fill="#8b0000"/>
<rect x="34" y="394" width="1" height="1" fill="#8b0000" opacity="0.6"/>
<rect x="32" y="394" width="1" height="1" fill="#8b0000" opacity="0.4"/>
<rect x="32" y="395" width="1" height="4" fill="#8b0000"/>
<rect x="31" y="395" width="1" height="4" fill="#8b0000" opacity="0.6"/>
<rect x="30" y="399" width="2" height="1" fill="#8b0000"/>
<rect x="32" y="399" width="1" height="1" fill="#8b0000" opacity="0.5"/>
<rect x="20" y="404" width="16" height="13" fill="#c4c4c4"/>
<rect x="21" y="405" width="4" height="2" fill="#ffffff"/>
<rect x="26" y="405" width="4" height="2" fill="#ffffff"/>
<rect x="31" y="405" width="4" height="2" fill="#ffffff"/>
<rect x="21" y="408" width="4" height="2" fill="#ffffff"/>
<rect x="26" y="408" width="4" height="2" fill="#ffffff"/>
<rect x="31" y="408" width="4" height="2" fill="#ffffff"/>
<rect x="21" y="411" width="4" height="2" fill="#ffffff"/>
<rect x="26" y="411" width="4" height="2" fill="#ffffff"/>
<rect x="31" y="411" width="4" height="2" fill="#ffffff"/>
<rect x="21" y="414" width="4" height="2" fill="#ffffff"/>
<rect x="26" y="414" width="4" height="2" fill="#ffffff"/>
<rect x="31" y="414" width="4" height="2" fill="#ffffff"/>
<rect x="110" y="389" width="1" height="1" fill="#9a9a9a"/>
<rect x="111" y="389" width="1" height="1" fill="#9a9a9a"/>
<rect x="112" y="389" width="1" height="1" fill="#9a9a9a"/>
<rect x="113" y="389" width="1" height="1" fill="#9a9a9a"/>
<rect x="114" y="389" width="1" height="1" fill="#9a9a9a"/>
<rect x="115" y="389" width="1" height="1" fill="#9a9a9a"/>
<rect x="116" y="389" width="1" height="1" fill="#9a9a9a"/>
<rect x="117" y="389" width="1" height="1" fill="#9a9a9a"/>
<rect x="118" y="389" width="1" height="1" fill="#9a9a9a"/>
<rect x="119" y="389" width="1" height="1" fill="#9a9a9a"/>
<rect x="120" y="389" width="1" height="1" fill="#9a9a9a"/>
<rect x="121" y="389" width="1" height="1" fill="#9a9a9a"/>
<rect x="110" y="390" width="1" height="1" fill="#9a9a9a"/>
<rect x="111" y="390" width="1" height="1" fill="#ffffff"/>
<rect x="112" y="390" width="1" height="1" fill="#ffffff"/>
<rect x="113" y="390" width="1" height="1" fill="#ffffff"/>
<rect x="114" y="390" width="1" height="1" fill="#ffffff"/>
<rect x="115" y="390" width="1" height="1" fill="#ffffff"/>
<rect x="116" y="390" width="1" height="1" fill="#ffffff"/>
<rect x="117" y="390" width="1" height="1" fill="#ffffff"/>
<rect x="118" y="390" width="1" height="1" fill="#ffffff"/>
<rect x="119" y="390" width="1" height="1" fill="#ffffff"/>
<rect x="120" y="390" width="1" height="1" fill="#ffffff"/>
<rect x="121" y="390" width="1" height="1" fill="#9a9a9a"/>
<rect x="110" y="391" width="1" height="1" fill="#9a9a9a"/>
<rect x="111" y="391" width="1" height="1" fill="#ffffff"/>
<rect x="112" y="391" width="1" height="1" fill="#ffffff"/>
<rect x="113" y="391" width="1" height="1" fill="#ffffff"/>
<rect x="114" y="391" width="1" height="1" fill="#ffffff"/>
<rect x="115" y="391" width="1" height="1" fill="#ffffff"/>
<rect x="116" y="391" width="1" height="1" fill="#ffffff"/>
<rect x="117" y="391" width="1" height="1" fill="#ffffff"/>
<rect x="118" y="391" width="1" height="1" fill="#ffffff"/>
<rect x="119" y="391" width="1" height="1" fill="#ffffff"/>
<rect x="120" y="391" width="1" height="1" fill="#ffffff"/>
<rect x="121" y="391" width="1" height="1" fill="#9a9a9a"/>
<rect x="111" y="392" width="1" height="1" fill="#9a9a9a"/>
<rect x="112" y="392" width="1" height="1" fill="#ffffff"/>
<rect x="113" y="392" width="1" height="1" fill="#ffffff"/>
<rect x="114" y="392" width="1" height="1" fill="#ffffff"/>
<rect x="115" y="392" width="1" height="1" fill="#ffffff"/>
<rect x="116" y="392" width="1" height="1" fill="#ffffff"/>
<rect x="117" y="392" width="1" height="1" fill="#ffffff"/>
<rect x="118" y="392" width="1" height="1" fill="#ffffff"/>
<rect x="119" y="392" width="1" height="1" fill="#ffffff"/>
<rect x="120" y="392" width="1" height="1" fill="#9a9a9a"/>
<rect x="112" y="393" width="1" height="1" fill="#9a9a9a"/>
<rect x="113" y="393" width="1" height="1" fill="#ffffff"/>
<rect x="114" y="393" width="1" height="1" fill="#ffffff"/>
<rect x="115" y="393" width="1" height="1" fill="#ffffff"/>
<rect x="116" y="393" width="1" height="1" fill="#ffffff"/>
<rect x="117" y="393" width="1" height="1" fill="#ffffff"/>
<rect x="118" y="393" width="1" height="1" fill="#ffffff"/>
<rect x="119" y="393" width="1" height="1" fill="#9a9a9a"/>
<rect x="113" y="394" width="1" height="1" fill="#9a9a9a"/>
<rect x="114" y="394" width="1" height="1" fill="#ffffff"/>
<rect x="115" y="394" width="1" height="1" fill="#ffffff"/>
<rect x="116" y="394" width="1" height="1" fill="#ffffff"/>
<rect x="117" y="394" width="1" height="1" fill="#ffffff"/>
<rect x="118" y="394" width="1" height="1" fill="#9a9a9a"/>
<rect x="114" y="395" width="1" height="1" fill="#9a9a9a"/>
<rect x="115" y="395" width="1" height="1" fill="#ffffff"/>
<rect x="116" y="395" width="1" height="1" fill="#ffffff"/>
<rect x="117" y="395" width="1" height="1" fill="#9a9a9a"/>
<rect x="114" y="396" width="1" height="1" fill="#9a9a9a"/>
<rect x="115" y="396" width="1" height="1" fill="#ffffff"/>
<rect x="116" y="396" width="1" height="1" fill="#ffffff"/>
<rect x="117" y="396" width="1" height="1" fill="#9a9a9a"/>
<rect x="114" y="397" width="1" height="1" fill="#9a9a9a"/>
<rect x="115" y="397" width="1" height="1" fill="#9a9a9a"/>
<rect x="116" y="397" width="1" height="1" fill="#9a9a9a"/>
<rect x="117" y="397" width="1" height="1" fill="#9a9a9a"/>
<rect x="209" y="409" width="1" height="2" fill="#0a48e0"/>
<rect x="211" y="409" width="1" height="2" fill="#0a48e0"/>
<rect x="221" y="409" width="1" height="2" fill="#0a48e0"/>
<rect x="223" y="409" width="1" height="2" fill="#0a48e0"/>
<rect x="213" y="411" width="1" height="5" fill="#0a48e0"/>
<rect x="215" y="411" width="1" height="5" fill="#0a48e0"/>
<rect x="214" y="410" width="1" height="1" fill="#0a48e0"/>
<rect x="214" y="413" width="1" height="1" fill="#0a48e0"/>
<rect x="213" y="410" width="1" height="1" fill="#0a48e0" opacity="0.5"/>
<rect x="215" y="410" width="1" height="1" fill="#0a48e0" opacity="0.5"/>
<rect x="217" y="410" width="1" height="6" fill="#0a48e0"/>
<rect x="218" y="410" width="1" height="1" fill="#0a48e0"/>
<rect x="218" y="412" width="1" height="1" fill="#0a48e0"/>
<rect x="218" y="415" width="1" height="1" fill="#0a48e0"/>
<rect x="219" y="411" width="1" height="1" fill="#0a48e0"/>
<rect x="219" y="413" width="1" height="2" fill="#0a48e0"/>
<rect x="219" y="410" width="1" height="1" fill="#0a48e0" opacity="0.35"/>
<rect x="219" y="412" width="1" height="1" fill="#0a48e0" opacity="0.6"/>
<rect x="219" y="415" width="1" height="1" fill="#0a48e0" opacity="0.35"/>
<rect x="210" y="418" width="2" height="2" fill="#009a00"/>
<rect x="214" y="418" width="2" height="2" fill="#009a00"/>
<rect x="218" y="418" width="2" height="2" fill="#009a00"/>
<rect x="222" y="418" width="2" height="2" fill="#009a00"/>
<rect x="108" y="425" width="11" height="52" fill="#f5f5f5"/>
<rect x="109" y="426" width="9" height="50" fill="#c6c6c6"/>
<rect x="109" y="426" width="8" height="49" fill="#fcfcfc"/>
<rect x="110" y="426" width="7" height="49" fill="#ececec"/>
<rect x="113" y="430" width="1" height="1" fill="#000"/>
<rect x="112" y="431" width="3" height="1" fill="#000"/>
<rect x="111" y="432" width="5" height="1" fill="#000"/>
<rect x="110" y="433" width="7" height="1" fill="#000"/>
<rect x="123" y="427" width="1" height="11" fill="#8b0000"/>
<rect x="124" y="427" width="3" height="1" fill="#8b0000"/>
<rect x="124" y="437" width="3" height="1" fill="#8b0000"/>
<rect x="124" y="428" width="1" height="9" fill="#8b0000" opacity="0.7"/>
<rect x="125" y="428" width="2" height="1" fill="#8b0000" opacity="0.7"/>
<rect x="125" y="436" width="2" height="1" fill="#8b0000" opacity="0.7"/>
<rect x="134" y="427" width="1" height="11" fill="#8b0000"/>
<rect x="131" y="427" width="3" height="1" fill="#8b0000"/>
<rect x="131" y="437" width="3" height="1" fill="#8b0000"/>
<rect x="133" y="428" width="1" height="9" fill="#8b0000" opacity="0.7"/>
<rect x="131" y="428" width="2" height="1" fill="#8b0000" opacity="0.7"/>
<rect x="131" y="436" width="2" height="1" fill="#8b0000" opacity="0.7"/>
<rect x="211" y="427" width="1" height="1" fill="#9a9a9a"/>
<rect x="212" y="427" width="1" height="1" fill="#9a9a9a"/>
<rect x="213" y="427" width="1" height="1" fill="#9a9a9a"/>
<rect x="214" y="427" width="1" height="1" fill="#9a9a9a"/>
<rect x="215" y="427" width="1" height="1" fill="#9a9a9a"/>
<rect x="216" y="427" width="1" height="1" fill="#9a9a9a"/>
<rect x="217" y="427" width="1" height="1" fill="#9a9a9a"/>
<rect x="218" y="427" width="1" height="1" fill="#9a9a9a"/>
<rect x="219" y="427" width="1" height="1" fill="#9a9a9a"/>
<rect x="220" y="427" width="1" height="1" fill="#9a9a9a"/>
<rect x="221" y="427" width="1" height="1" fill="#9a9a9a"/>
<rect x="222" y="427" width="1" height="1" fill="#9a9a9a"/>
<rect x="211" y="428" width="1" height="1" fill="#9a9a9a"/>
<rect x="212" y="428" width="1" height="1" fill="#ffffff"/>
<rect x="213" y="428" width="1" height="1" fill="#ffffff"/>
<rect x="214" y="428" width="1" height="1" fill="#ffffff"/>
<rect x="215" y="428" width="1" height="1" fill="#ffffff"/>
<rect x="216" y="428" width="1" height="1" fill="#ffffff"/>
<rect x="217" y="428" width="1" height="1" fill="#ffffff"/>
<rect x="218" y="428" width="1" height="1" fill="#ffffff"/>
<rect x="219" y="428" width="1" height="1" fill="#ffffff"/>
<rect x="220" y="428" width="1" height="1" fill="#ffffff"/>
<rect x="221" y="428" width="1" height="1" fill="#ffffff"/>
<rect x="222" y="428" width="1" height="1" fill="#9a9a9a"/>
<rect x="211" y="429" width="1" height="1" fill="#9a9a9a"/>
<rect x="212" y="429" width="1" height="1" fill="#ffffff"/>
<rect x="213" y="429" width="1" height="1" fill="#ffffff"/>
<rect x="214" y="429" width="1" height="1" fill="#ffffff"/>
<rect x="215" y="429" width="1" height="1" fill="#ffffff"/>
<rect x="216" y="429" width="1" height="1" fill="#ffffff"/>
<rect x="217" y="429" width="1" height="1" fill="#ffffff"/>
<rect x="218" y="429" width="1" height="1" fill="#ffffff"/>
<rect x="219" y="429" width="1" height="1" fill="#ffffff"/>
<rect x="220" y="429" width="1" height="1" fill="#ffffff"/>
<rect x="221" y="429" width="1" height="1" fill="#ffffff"/>
<rect x="222" y="429" width="1" height="1" fill="#9a9a9a"/>
<rect x="212" y="430" width="1" height="1" fill="#9a9a9a"/>
<rect x="213" y="430" width="1" height="1" fill="#ffffff"/>
<rect x="214" y="430" width="1" height="1" fill="#ffffff"/>
<rect x="215" y="430" width="1" height="1" fill="#ffffff"/>
<rect x="216" y="430" width="1" height="1" fill="#ffffff"/>
<rect x="217" y="430" width="1" height="1" fill="#ffffff"/>
<rect x="218" y="430" width="1" height="1" fill="#ffffff"/>
<rect x="219" y="430" width="1" height="1" fill="#ffffff"/>
<rect x="220" y="430" width="1" height="1" fill="#ffffff"/>
<rect x="221" y="430" width="1" height="1" fill="#9a9a9a"/>
<rect x="213" y="431" width="1" height="1" fill="#9a9a9a"/>
<rect x="214" y="431" width="1" height="1" fill="#ffffff"/>
<rect x="215" y="431" width="1" height="1" fill="#ffffff"/>
<rect x="216" y="431" width="1" height="1" fill="#ffffff"/>
<rect x="217" y="431" width="1" height="1" fill="#ffffff"/>
<rect x="218" y="431" width="1" height="1" fill="#ffffff"/>
<rect x="219" y="431" width="1" height="1" fill="#ffffff"/>
<rect x="220" y="431" width="1" height="1" fill="#9a9a9a"/>
<rect x="214" y="432" width="1" height="1" fill="#9a9a9a"/>
<rect x="215" y="432" width="1" height="1" fill="#ffffff"/>
<rect x="216" y="432" width="1" height="1" fill="#ffffff"/>
<rect x="217" y="432" width="1" height="1" fill="#ffffff"/>
<rect x="218" y="432" width="1" height="1" fill="#ffffff"/>
<rect x="219" y="432" width="1" height="1" fill="#9a9a9a"/>
<rect x="215" y="433" width="1" height="1" fill="#9a9a9a"/>
<rect x="216" y="433" width="1" height="1" fill="#ffffff"/>
<rect x="217" y="433" width="1" height="1" fill="#ffffff"/>
<rect x="218" y="433" width="1" height="1" fill="#9a9a9a"/>
<rect x="215" y="434" width="1" height="1" fill="#9a9a9a"/>
<rect x="216" y="434" width="1" height="1" fill="#ffffff"/>
<rect x="217" y="434" width="1" height="1" fill="#ffffff"/>
<rect x="218" y="434" width="1" height="1" fill="#9a9a9a"/>
<rect x="215" y="435" width="1" height="1" fill="#9a9a9a"/>
<rect x="216" y="435" width="1" height="1" fill="#9a9a9a"/>
<rect x="217" y="435" width="1" height="1" fill="#9a9a9a"/>
<rect x="218" y="435" width="1" height="1" fill="#9a9a9a"/>
<rect x="310" y="447" width="1" height="2" fill="#0a48e0"/>
<rect x="312" y="447" width="1" height="2" fill="#0a48e0"/>
<rect x="322" y="447" width="1" height="2" fill="#0a48e0"/>
<rect x="324" y="447" width="1" height="2" fill="#0a48e0"/>
<rect x="314" y="449" width="1" height="5" fill="#0a48e0"/>
<rect x="316" y="449" width="1" height="5" fill="#0a48e0"/>
<rect x="315" y="448" width="1" height="1" fill="#0a48e0"/>
<rect x="315" y="451" width="1" height="1" fill="#0a48e0"/>
<rect x="314" y="448" width="1" height="1" fill="#0a48e0" opacity="0.5"/>
<rect x="316" y="448" width="1" height="1" fill="#0a48e0" opacity="0.5"/>
<rect x="318" y="448" width="1" height="6" fill="#0a48e0"/>
<rect x="319" y="448" width="1" height="1" fill="#0a48e0"/>
<rect x="319" y="450" width="1" height="1" fill="#0a48e0"/>
<rect x="319" y="453" width="1" height="1" fill="#0a48e0"/>
<rect x="320" y="449" width="1" height="1" fill="#0a48e0"/>
<rect x="320" y="451" width="1" height="2" fill="#0a48e0"/>
<rect x="320" y="448" width="1" height="1" fill="#0a48e0" opacity="0.35"/>
<rect x="320" y="450" width="1" height="1" fill="#0a48e0" opacity="0.6"/>
<rect x="320" y="453" width="1" height="1" fill="#0a48e0" opacity="0.35"/>
<rect x="311" y="456" width="2" height="2" fill="#009a00"/>
<rect x="315" y="456" width="2" height="2" fill="#009a00"/>
<rect x="319" y="456" width="2" height="2" fill="#009a00"/>
<rect x="323" y="456" width="2" height="2" fill="#009a00"/>
<rect x="310" y="466" width="1" height="2" fill="#0a48e0"/>
<rect x="312" y="466" width="1" height="2" fill="#0a48e0"/>
<rect x="322" y="466" width="1" height="2" fill="#0a48e0"/>
<rect x="324" y="466" width="1" height="2" fill="#0a48e0"/>
<rect x="314" y="468" width="1" height="5" fill="#0a48e0"/>
<rect x="316" y="468" width="1" height="5" fill="#0a48e0"/>
<rect x="315" y="467" width="1" height="1" fill="#0a48e0"/>
<rect x="315" y="470" width="1" height="1" fill="#0a48e0"/>
<rect x="314" y="467" width="1" height="1" fill="#0a48e0" opacity="0.5"/>
<rect x="316" y="467" width="1" height="1" fill="#0a48e0" opacity="0.5"/>
<rect x="318" y="467" width="1" height="6" fill="#0a48e0"/>
<rect x="319" y="467" width="1" height="1" fill="#0a48e0"/>
<rect x="319" y="469" width="1" height="1" fill="#0a48e0"/>
<rect x="319" y="472" width="1" height="1" fill="#0a48e0"/>
<rect x="320" y="468" width="1" height="1" fill="#0a48e0"/>
<rect x="320" y="470" width="1" height="2" fill="#0a48e0"/>
<rect x="320" y="467" width="1" height="1" fill="#0a48e0" opacity="0.35"/>
<rect x="320" y="469" width="1" height="1" fill="#0a48e0" opacity="0.6"/>
<rect x="320" y="472" width="1" height="1" fill="#0a48e0" opacity="0.35"/>
<rect x="311" y="475" width="2" height="2" fill="#009a00"/>
<rect x="315" y="475" width="2" height="2" fill="#009a00"/>
<rect x="319" y="475" width="2" height="2" fill="#009a00"/>
<rect x="323" y="475" width="2" height="2" fill="#009a00"/>
<rect x="209" y="485" width="1" height="2" fill="#0a48e0"/>
<rect x="211" y="485" width="1" height="2" fill="#0a48e0"/>
<rect x="221" y="485" width="1" height="2" fill="#0a48e0"/>
<rect x="223" y="485" width="1" height="2" fill="#0a48e0"/>
<rect x="213" y="487" width="1" height="5" fill="#0a48e0"/>
<rect x="215" y="487" width="1" height="5" fill="#0a48e0"/>
<rect x="214" y="486" width="1" height="1" fill="#0a48e0"/>
<rect x="214" y="489" width="1" height="1" fill="#0a48e0"/>
<rect x="213" y="486" width="1" height="1" fill="#0a48e0" opacity="0.5"/>
<rect x="215" y="486" width="1" height="1" fill="#0a48e0" opacity="0.5"/>
<rect x="217" y="486" width="1" height="6" fill="#0a48e0"/>
<rect x="218" y="486" width="1" height="1" fill="#0a48e0"/>
<rect x="218" y="488" width="1" height="1" fill="#0a48e0"/>
<rect x="218" y="491" width="1" height="1" fill="#0a48e0"/>
<rect x="219" y="487" width="1" height="1" fill="#0a48e0"/>
<rect x="219" y="489" width="1" height="2" fill="#0a48e0"/>
<rect x="219" y="486" width="1" height="1" fill="#0a48e0" opacity="0.35"/>
<rect x="219" y="488" width="1" height="1" fill="#0a48e0" opacity="0.6"/>
<rect x="219" y="491" width="1" height="1" fill="#0a48e0" opacity="0.35"/>
<rect x="209" y="504" width="1" height="2" fill="#0a48e0"/>
<rect x="211" y="504" width="1" height="2" fill="#0a48e0"/>
<rect x="221" y="504" width="1" height="2" fill="#0a48e0"/>
<rect x="223" y="504" width="1" height="2" fill="#0a48e0"/>
<rect x="213" y="506" width="1" height="5" fill="#0a48e0"/>
<rect x="215" y="506" width="1" height="5" fill="#0a48e0"/>
<rect x="214" y="505" width="1" height="1" fill="#0a48e0"/>
<rect x="214" y="508" width="1" height="1" fill="#0a48e0"/>
<rect x="213" y="505" width="1" height="1" fill="#0a48e0" opacity="0.5"/>
<rect x="215" y="505" width="1" height="1" fill="#0a48e0" opacity="0.5"/>
<rect x="217" y="505" width="1" height="6" fill="#0a48e0"/>
<rect x="218" y="505" width="1" height="1" fill="#0a48e0"/>
<rect x="218" y="507" width="1" height="1" fill="#0a48e0"/>
<rect x="218" y="510" width="1" height="1" fill="#0a48e0"/>
<rect x="219" y="506" width="1" height="1" fill="#0a48e0"/>
<rect x="219" y="508" width="1" height="2" fill="#0a48e0"/>
<rect x="219" y="505" width="1" height="1" fill="#0a48e0" opacity="0.35"/>
<rect x="219" y="507" width="1" height="1" fill="#0a48e0" opacity="0.6"/>
<rect x="219" y="510" width="1" height="1" fill="#0a48e0" opacity="0.35"/>
<rect x="210" y="513" width="2" height="2" fill="#009a00"/>
<rect x="214" y="513" width="2" height="2" fill="#009a00"/>
<rect x="218" y="513" width="2" height="2" fill="#009a00"/>
<rect x="222" y="513" width="2" height="2" fill="#009a00"/>
<rect x="211" y="143" width="6" height="10" fill="#303030"/>
<defs><linearGradient id="rg" x1="0" x2="1" y1="0" y2="0"><stop offset="0" stop-color="#ff4a3a"/><stop offset="1" stop-color="#ffb8a8"/></linearGradient></defs>
<rect x="212" y="144" width="4" height="8" fill="url(#rg)"/>
<rect x="216" y="140" width="11" height="4" fill="#303030"/>
<rect x="217" y="141" width="9" height="2" fill="#5ee08a"/>
<rect x="224" y="145" width="1" height="8" fill="#000"/>
<rect x="219" y="152" width="6" height="1" fill="#000"/>
<rect x="223" y="146" width="3" height="1" fill="#000"/>
<rect x="222" y="147" width="1" height="1" fill="#000"/>
<rect x="226" y="147" width="1" height="1" fill="#000"/>
<rect x="219" y="151" width="1" height="3" fill="#000"/>
<rect x="218" y="152" width="1" height="1" fill="#000"/>
<rect x="220" y="150" width="1" height="1" fill="#000"/>
<rect x="220" y="154" width="1" height="1" fill="#000"/>
<rect x="185" y="44" width="5" height="10" fill="#303030"/>
<rect x="186" y="45" width="3" height="2" fill="#fff"/>
<rect x="186" y="48" width="3" height="2" fill="#fff"/>
<rect x="186" y="51" width="3" height="2" fill="#fff"/>
<rect x="193" y="46" width="7" height="5" fill="#303030"/>
<rect x="194" y="47" width="5" height="3" fill="#fff"/>
<rect x="188" y="55" width="5" height="4" fill="#303030"/>
<rect x="189" y="56" width="3" height="2" fill="#fff"/>
<rect x="198" y="54" width="1" height="1" fill="#a00000"/>
<rect x="198" y="55" width="1" height="1" fill="#a00000"/>
<rect x="197" y="56" width="1" height="1" fill="#a00000"/>
<rect x="195" y="56" width="1" height="1" fill="#a00000"/>
<rect x="195" y="57" width="1" height="1" fill="#a00000"/>
<rect x="196" y="57" width="1" height="1" fill="#a00000"/>
<rect x="195" y="58" width="1" height="1" fill="#a00000"/>
<rect x="196" y="58" width="1" height="1" fill="#a00000"/>
<rect x="197" y="58" width="1" height="1" fill="#a00000"/>
<rect x="106" y="43" width="1" height="1" fill="#000"/>
<rect x="106" y="79" width="1" height="1" fill="#000"/>
<rect x="108" y="43" width="1" height="1" fill="#000"/>
<rect x="108" y="79" width="1" height="1" fill="#000"/>
<rect x="110" y="43" width="1" height="1" fill="#000"/>
<rect x="110" y="79" width="1" height="1" fill="#000"/>
<rect x="112" y="43" width="1" height="1" fill="#000"/>
<rect x="112" y="79" width="1" height="1" fill="#000"/>
<rect x="114" y="43" width="1" height="1" fill="#000"/>
<rect x="114" y="79" width="1" height="1" fill="#000"/>
<rect x="116" y="43" width="1" height="1" fill="#000"/>
<rect x="116" y="79" width="1" height="1" fill="#000"/>
<rect x="118" y="43" width="1" height="1" fill="#000"/>
<rect x="118" y="79" width="1" height="1" fill="#000"/>
<rect x="120" y="43" width="1" height="1" fill="#000"/>
<rect x="120" y="79" width="1" height="1" fill="#000"/>
<rect x="122" y="43" width="1" height="1" fill="#000"/>
<rect x="122" y="79" width="1" height="1" fill="#000"/>
<rect x="124" y="43" width="1" height="1" fill="#000"/>
<rect x="124" y="79" width="1" height="1" fill="#000"/>
<rect x="126" y="43" width="1" height="1" fill="#000"/>
<rect x="126" y="79" width="1" height="1" fill="#000"/>
<rect x="128" y="43" width="1" height="1" fill="#000"/>
<rect x="128" y="79" width="1" height="1" fill="#000"/>
<rect x="130" y="43" width="1" height="1" fill="#000"/>
<rect x="130" y="79" width="1" height="1" fill="#000"/>
<rect x="132" y="43" width="1" height="1" fill="#000"/>
<rect x="132" y="79" width="1" height="1" fill="#000"/>
<rect x="134" y="43" width="1" height="1" fill="#000"/>
<rect x="134" y="79" width="1" height="1" fill="#000"/>
<rect x="136" y="43" width="1" height="1" fill="#000"/>
<rect x="136" y="79" width="1" height="1" fill="#000"/>
<rect x="138" y="43" width="1" height="1" fill="#000"/>
<rect x="138" y="79" width="1" height="1" fill="#000"/>
<rect x="140" y="43" width="1" height="1" fill="#000"/>
<rect x="140" y="79" width="1" height="1" fill="#000"/>
<rect x="142" y="43" width="1" height="1" fill="#000"/>
<rect x="142" y="79" width="1" height="1" fill="#000"/>
<rect x="144" y="43" width="1" height="1" fill="#000"/>
<rect x="144" y="79" width="1" height="1" fill="#000"/>
<rect x="146" y="43" width="1" height="1" fill="#000"/>
<rect x="146" y="79" width="1" height="1" fill="#000"/>
<rect x="148" y="43" width="1" height="1" fill="#000"/>
<rect x="148" y="79" width="1" height="1" fill="#000"/>
<rect x="150" y="43" width="1" height="1" fill="#000"/>
<rect x="150" y="79" width="1" height="1" fill="#000"/>
<rect x="152" y="43" width="1" height="1" fill="#000"/>
<rect x="152" y="79" width="1" height="1" fill="#000"/>
<rect x="154" y="43" width="1" height="1" fill="#000"/>
<rect x="154" y="79" width="1" height="1" fill="#000"/>
<rect x="156" y="43" width="1" height="1" fill="#000"/>
<rect x="156" y="79" width="1" height="1" fill="#000"/>
<rect x="158" y="43" width="1" height="1" fill="#000"/>
<rect x="158" y="79" width="1" height="1" fill="#000"/>
<rect x="160" y="43" width="1" height="1" fill="#000"/>
<rect x="160" y="79" width="1" height="1" fill="#000"/>
<rect x="162" y="43" width="1" height="1" fill="#000"/>
<rect x="162" y="79" width="1" height="1" fill="#000"/>
<rect x="164" y="43" width="1" height="1" fill="#000"/>
<rect x="164" y="79" width="1" height="1" fill="#000"/>
<rect x="166" y="43" width="1" height="1" fill="#000"/>
<rect x="166" y="79" width="1" height="1" fill="#000"/>
<rect x="168" y="43" width="1" height="1" fill="#000"/>
<rect x="168" y="79" width="1" height="1" fill="#000"/>
<rect x="170" y="43" width="1" height="1" fill="#000"/>
<rect x="170" y="79" width="1" height="1" fill="#000"/>
<rect x="172" y="43" width="1" height="1" fill="#000"/>
<rect x="172" y="79" width="1" height="1" fill="#000"/>
<rect x="174" y="43" width="1" height="1" fill="#000"/>
<rect x="174" y="79" width="1" height="1" fill="#000"/>
<rect x="176" y="43" width="1" height="1" fill="#000"/>
<rect x="176" y="79" width="1" height="1" fill="#000"/>
<rect x="178" y="43" width="1" height="1" fill="#000"/>
<rect x="178" y="79" width="1" height="1" fill="#000"/>
<rect x="180" y="43" width="1" height="1" fill="#000"/>
<rect x="180" y="79" width="1" height="1" fill="#000"/>
<rect x="182" y="43" width="1" height="1" fill="#000"/>
<rect x="182" y="79" width="1" height="1" fill="#000"/>
<rect x="184" y="43" width="1" height="1" fill="#000"/>
<rect x="184" y="79" width="1" height="1" fill="#000"/>
<rect x="186" y="43" width="1" height="1" fill="#000"/>
<rect x="186" y="79" width="1" height="1" fill="#000"/>
<rect x="188" y="43" width="1" height="1" fill="#000"/>
<rect x="188" y="79" width="1" height="1" fill="#000"/>
<rect x="190" y="43" width="1" height="1" fill="#000"/>
<rect x="190" y="79" width="1" height="1" fill="#000"/>
<rect x="192" y="43" width="1" height="1" fill="#000"/>
<rect x="192" y="79" width="1" height="1" fill="#000"/>
<rect x="194" y="43" width="1" height="1" fill="#000"/>
<rect x="194" y="79" width="1" height="1" fill="#000"/>
<rect x="196" y="43" width="1" height="1" fill="#000"/>
<rect x="196" y="79" width="1" height="1" fill="#000"/>
<rect x="198" y="43" width="1" height="1" fill="#000"/>
<rect x="198" y="79" width="1" height="1" fill="#000"/>
<rect x="200" y="43" width="1" height="1" fill="#000"/>
<rect x="200" y="79" width="1" height="1" fill="#000"/>
<rect x="202" y="43" width="1" height="1" fill="#000"/>
<rect x="202" y="79" width="1" height="1" fill="#000"/>
<rect x="204" y="43" width="1" height="1" fill="#000"/>
<rect x="204" y="79" width="1" height="1" fill="#000"/>
<rect x="106" y="43" width="1" height="1" fill="#000"/>
<rect x="205" y="43" width="1" height="1" fill="#000"/>
<rect x="106" y="45" width="1" height="1" fill="#000"/>
<rect x="205" y="45" width="1" height="1" fill="#000"/>
<rect x="106" y="47" width="1" height="1" fill="#000"/>
<rect x="205" y="47" width="1" height="1" fill="#000"/>
<rect x="106" y="49" width="1" height="1" fill="#000"/>
<rect x="205" y="49" width="1" height="1" fill="#000"/>
<rect x="106" y="51" width="1" height="1" fill="#000"/>
<rect x="205" y="51" width="1" height="1" fill="#000"/>
<rect x="106" y="53" width="1" height="1" fill="#000"/>
<rect x="205" y="53" width="1" height="1" fill="#000"/>
<rect x="106" y="55" width="1" height="1" fill="#000"/>
<rect x="205" y="55" width="1" height="1" fill="#000"/>
<rect x="106" y="57" width="1" height="1" fill="#000"/>
<rect x="205" y="57" width="1" height="1" fill="#000"/>
<rect x="106" y="59" width="1" height="1" fill="#000"/>
<rect x="205" y="59" width="1" height="1" fill="#000"/>
<rect x="106" y="61" width="1" height="1" fill="#000"/>
<rect x="205" y="61" width="1" height="1" fill="#000"/>
<rect x="106" y="63" width="1" height="1" fill="#000"/>
<rect x="205" y="63" width="1" height="1" fill="#000"/>
<rect x="106" y="65" width="1" height="1" fill="#000"/>
<rect x="205" y="65" width="1" height="1" fill="#000"/>
<rect x="106" y="67" width="1" height="1" fill="#000"/>
<rect x="205" y="67" width="1" height="1" fill="#000"/>
<rect x="106" y="69" width="1" height="1" fill="#000"/>
<rect x="205" y="69" width="1" height="1" fill="#000"/>
<rect x="106" y="71" width="1" height="1" fill="#000"/>
<rect x="205" y="71" width="1" height="1" fill="#000"/>
<rect x="106" y="73" width="1" height="1" fill="#000"/>
<rect x="205" y="73" width="1" height="1" fill="#000"/>
<rect x="106" y="75" width="1" height="1" fill="#000"/>
<rect x="205" y="75" width="1" height="1" fill="#000"/>
<rect x="106" y="77" width="1" height="1" fill="#000"/>
<rect x="205" y="77" width="1" height="1" fill="#000"/>
<rect x="106" y="79" width="1" height="1" fill="#000"/>
<rect x="205" y="79" width="1" height="1" fill="#000"/>
</svg>
<div class="t" style="left:39px;top:4px;font-size:11.6px;color:#747474;-webkit-text-stroke:0.1px currentColor;">1</div><div class="t" style="left:108px;top:23px;font-size:11.0px;color:#000000;font-weight:bold;">Name</div><div class="t" style="left:228px;top:23px;font-size:11.6px;color:#000000;-webkit-text-stroke:0.1px currentColor;letter-spacing:0.1px;">A Night at the Opera</div><div class="t" style="left:140px;top:42px;font-size:11.0px;color:#000000;font-weight:bold;">Genre</div><div class="t" style="left:208px;top:61px;font-size:11.6px;color:#747474;-webkit-text-stroke:0.1px currentColor;">1</div><div class="t" style="left:329px;top:61px;font-size:11.6px;color:#000000;-webkit-text-stroke:0.1px currentColor;">Rock</div><div class="t" style="left:108px;top:80px;font-size:11.0px;color:#000000;font-weight:bold;letter-spacing:-0.2px;">ReleaseDate</div><div class="t" style="left:228px;top:80px;font-size:11.6px;color:#000000;-webkit-text-stroke:0.1px currentColor;letter-spacing:-0.18px;">1975-11-21</div><div class="t" style="left:108px;top:99px;font-size:11.0px;color:#000000;font-weight:bold;">Label</div><div class="t" style="left:228px;top:99px;font-size:11.6px;color:#000000;-webkit-text-stroke:0.1px currentColor;">EMI / Hollywood Records</div><div class="t" style="left:140px;top:118px;font-size:11.0px;color:#000000;font-weight:bold;letter-spacing:-0.6px;">Tracks</div><div class="t" style="left:309px;top:137px;font-size:11.0px;color:#000000;font-weight:bold;">Title</div><div class="t" style="left:411px;top:137px;font-size:11.0px;color:#000000;font-weight:bold;">Duration</div><div class="t" style="left:511px;top:137px;font-size:11.0px;color:#000000;font-weight:bold;">Writer</div><div class="t" style="left:228px;top:156px;font-size:11.6px;color:#747474;-webkit-text-stroke:0.1px currentColor;">1</div><div class="t" style="left:329px;top:156px;font-size:11.6px;color:#000000;-webkit-text-stroke:0.1px currentColor;letter-spacing:-0.22px;width:79px;overflow:hidden;">Death on Two Legs</div><div class="t" style="left:430px;top:156px;font-size:11.6px;color:#000000;-webkit-text-stroke:0.1px currentColor;letter-spacing:-0.6px;width:79px;overflow:hidden;">03:43</div><div class="t" style="left:531px;top:156px;font-size:11.6px;color:#000000;-webkit-text-stroke:0.1px currentColor;width:79px;overflow:hidden;">Freddie Mercury</div><div class="t" style="left:228px;top:175px;font-size:11.6px;color:#747474;-webkit-text-stroke:0.1px currentColor;">2</div><div class="t" style="left:329px;top:175px;font-size:11.6px;color:#000000;-webkit-text-stroke:0.1px currentColor;letter-spacing:-0.22px;width:79px;overflow:hidden;">Lazing on a Sunday Afternoon</div><div class="t" style="left:430px;top:175px;font-size:11.6px;color:#000000;-webkit-text-stroke:0.1px currentColor;letter-spacing:-0.6px;width:79px;overflow:hidden;">01:08</div><div class="t" style="left:531px;top:175px;font-size:11.6px;color:#000000;-webkit-text-stroke:0.1px currentColor;width:79px;overflow:hidden;">Freddie Mercury</div><div class="t" style="left:228px;top:194px;font-size:11.6px;color:#747474;-webkit-text-stroke:0.1px currentColor;">3</div><div class="t" style="left:329px;top:194px;font-size:11.6px;color:#000000;-webkit-text-stroke:0.1px currentColor;letter-spacing:-0.22px;width:79px;overflow:hidden;">I&#8217;m in Love with My Car</div><div class="t" style="left:430px;top:194px;font-size:11.6px;color:#000000;-webkit-text-stroke:0.1px currentColor;letter-spacing:-0.6px;width:79px;overflow:hidden;">03:05</div><div class="t" style="left:531px;top:194px;font-size:11.6px;color:#000000;-webkit-text-stroke:0.1px currentColor;width:79px;overflow:hidden;">Roger Taylor</div><div class="t" style="left:228px;top:213px;font-size:11.6px;color:#747474;-webkit-text-stroke:0.1px currentColor;">4</div><div class="t" style="left:329px;top:213px;font-size:11.6px;color:#000000;-webkit-text-stroke:0.1px currentColor;letter-spacing:-0.22px;width:79px;overflow:hidden;">You&#8217;re My Best Friend</div><div class="t" style="left:430px;top:213px;font-size:11.6px;color:#000000;-webkit-text-stroke:0.1px currentColor;letter-spacing:-0.6px;width:79px;overflow:hidden;">02:50</div><div class="t" style="left:531px;top:213px;font-size:11.6px;color:#000000;-webkit-text-stroke:0.1px currentColor;width:79px;overflow:hidden;">John Deacon</div><div class="t" style="left:228px;top:232px;font-size:11.6px;color:#747474;-webkit-text-stroke:0.1px currentColor;">5</div><div class="t" style="left:329px;top:232px;font-size:11.6px;color:#000000;-webkit-text-stroke:0.1px currentColor;letter-spacing:-0.22px;width:79px;overflow:hidden;">&#8217;39</div><div class="t" style="left:430px;top:232px;font-size:11.6px;color:#000000;-webkit-text-stroke:0.1px currentColor;letter-spacing:-0.6px;width:79px;overflow:hidden;">03:25</div><div class="t" style="left:531px;top:232px;font-size:11.6px;color:#000000;-webkit-text-stroke:0.1px currentColor;width:79px;overflow:hidden;">Brian May</div><div class="t" style="left:228px;top:251px;font-size:11.6px;color:#747474;-webkit-text-stroke:0.1px currentColor;">6</div><div class="t" style="left:329px;top:251px;font-size:11.6px;color:#000000;-webkit-text-stroke:0.1px currentColor;letter-spacing:-0.22px;width:79px;overflow:hidden;">Sweet Lady</div><div class="t" style="left:430px;top:251px;font-size:11.6px;color:#000000;-webkit-text-stroke:0.1px currentColor;letter-spacing:-0.6px;width:79px;overflow:hidden;">04:01</div><div class="t" style="left:531px;top:251px;font-size:11.6px;color:#000000;-webkit-text-stroke:0.1px currentColor;width:79px;overflow:hidden;">Brian May</div><div class="t" style="left:228px;top:270px;font-size:11.6px;color:#747474;-webkit-text-stroke:0.1px currentColor;">7</div><div class="t" style="left:329px;top:270px;font-size:11.6px;color:#000000;-webkit-text-stroke:0.1px currentColor;letter-spacing:-0.22px;width:79px;overflow:hidden;">Seaside Rendezvous</div><div class="t" style="left:430px;top:270px;font-size:11.6px;color:#000000;-webkit-text-stroke:0.1px currentColor;letter-spacing:-0.6px;width:79px;overflow:hidden;">02:13</div><div class="t" style="left:531px;top:270px;font-size:11.6px;color:#000000;-webkit-text-stroke:0.1px currentColor;width:79px;overflow:hidden;">Freddie Mercury</div><div class="t" style="left:228px;top:289px;font-size:11.6px;color:#747474;-webkit-text-stroke:0.1px currentColor;">8</div><div class="t" style="left:329px;top:289px;font-size:11.6px;color:#000000;-webkit-text-stroke:0.1px currentColor;letter-spacing:-0.22px;width:79px;overflow:hidden;">The Prophet&#8217;s Song</div><div class="t" style="left:430px;top:289px;font-size:11.6px;color:#000000;-webkit-text-stroke:0.1px currentColor;letter-spacing:-0.6px;width:79px;overflow:hidden;">08:17</div><div class="t" style="left:531px;top:289px;font-size:11.6px;color:#000000;-webkit-text-stroke:0.1px currentColor;width:79px;overflow:hidden;">Brian May</div><div class="t" style="left:228px;top:308px;font-size:11.6px;color:#747474;-webkit-text-stroke:0.1px currentColor;">9</div><div class="t" style="left:329px;top:308px;font-size:11.6px;color:#000000;-webkit-text-stroke:0.1px currentColor;letter-spacing:-0.22px;width:79px;overflow:hidden;">Love of My Life</div><div class="t" style="left:430px;top:308px;font-size:11.6px;color:#000000;-webkit-text-stroke:0.1px currentColor;letter-spacing:-0.6px;width:79px;overflow:hidden;">03:38</div><div class="t" style="left:531px;top:308px;font-size:11.6px;color:#000000;-webkit-text-stroke:0.1px currentColor;width:79px;overflow:hidden;">Freddie Mercury</div><div class="t" style="left:228px;top:327px;font-size:11.6px;color:#747474;-webkit-text-stroke:0.1px currentColor;">10</div><div class="t" style="left:329px;top:327px;font-size:11.6px;color:#000000;-webkit-text-stroke:0.1px currentColor;letter-spacing:-0.22px;width:79px;overflow:hidden;">Good Company</div><div class="t" style="left:430px;top:327px;font-size:11.6px;color:#000000;-webkit-text-stroke:0.1px currentColor;letter-spacing:-0.6px;width:79px;overflow:hidden;">03:26</div><div class="t" style="left:531px;top:327px;font-size:11.6px;color:#000000;-webkit-text-stroke:0.1px currentColor;width:79px;overflow:hidden;">Brian May</div><div class="t" style="left:228px;top:346px;font-size:11.6px;color:#747474;-webkit-text-stroke:0.1px currentColor;">11</div><div class="t" style="left:329px;top:346px;font-size:11.6px;color:#000000;-webkit-text-stroke:0.1px currentColor;letter-spacing:-0.22px;width:79px;overflow:hidden;">Bohemian Rhapsody</div><div class="t" style="left:430px;top:346px;font-size:11.6px;color:#000000;-webkit-text-stroke:0.1px currentColor;letter-spacing:-0.6px;width:79px;overflow:hidden;">05:55</div><div class="t" style="left:531px;top:346px;font-size:11.6px;color:#000000;-webkit-text-stroke:0.1px currentColor;width:79px;overflow:hidden;">Freddie Mercury</div><div class="t" style="left:228px;top:365px;font-size:11.6px;color:#747474;-webkit-text-stroke:0.1px currentColor;">12</div><div class="t" style="left:329px;top:365px;font-size:11.6px;color:#000000;-webkit-text-stroke:0.1px currentColor;letter-spacing:-0.22px;width:79px;overflow:hidden;">God Save the Queen</div><div class="t" style="left:430px;top:365px;font-size:11.6px;color:#000000;-webkit-text-stroke:0.1px currentColor;letter-spacing:-0.6px;width:79px;overflow:hidden;">01:11</div><div class="t" style="left:531px;top:365px;font-size:11.6px;color:#000000;-webkit-text-stroke:0.1px currentColor;width:79px;overflow:hidden;">Traditional, arr. May</div><div class="t" style="left:39px;top:384px;font-size:11.6px;color:#747474;-webkit-text-stroke:0.1px currentColor;">2</div><div class="t" style="left:108px;top:403px;font-size:11.0px;color:#000000;font-weight:bold;">Name</div><div class="t" style="left:228px;top:403px;font-size:11.6px;color:#000000;-webkit-text-stroke:0.1px currentColor;letter-spacing:-0.29px;">A Day at the Races</div><div class="t" style="left:140px;top:422px;font-size:11.0px;color:#000000;font-weight:bold;">Genre</div><div class="t" style="left:208px;top:441px;font-size:11.6px;color:#747474;-webkit-text-stroke:0.1px currentColor;">1</div><div class="t" style="left:329px;top:441px;font-size:11.6px;color:#000000;-webkit-text-stroke:0.1px currentColor;">Rock</div><div class="t" style="left:208px;top:460px;font-size:11.6px;color:#747474;-webkit-text-stroke:0.1px currentColor;">2</div><div class="t" style="left:329px;top:460px;font-size:11.6px;color:#000000;-webkit-text-stroke:0.1px currentColor;">Pop</div><div class="t" style="left:108px;top:479px;font-size:11.0px;color:#000000;font-weight:bold;letter-spacing:-0.2px;">ReleaseDate</div><div class="t" style="left:228px;top:479px;font-size:11.6px;color:#000000;-webkit-text-stroke:0.1px currentColor;letter-spacing:-0.22px;">1976-12-10</div><div class="t" style="left:108px;top:498px;font-size:11.0px;color:#000000;font-weight:bold;">Label</div><div class="t" style="left:228px;top:498px;font-size:11.6px;color:#000000;-webkit-text-stroke:0.1px currentColor;letter-spacing:0.05px;">EMI, Parlophone / Elektra, Hollywood</div>
<svg width="725" height="510" shape-rendering="crispEdges">
<rect x="183" y="67" width="1" height="1" fill="#000"/><rect x="183" y="68" width="1" height="1" fill="#000"/><rect x="184" y="68" width="1" height="1" fill="#000"/><rect x="183" y="69" width="1" height="1" fill="#000"/><rect x="184" y="69" width="1" height="1" fill="#fff"/><rect x="185" y="69" width="1" height="1" fill="#000"/><rect x="183" y="70" width="1" height="1" fill="#000"/><rect x="184" y="70" width="1" height="1" fill="#fff"/><rect x="185" y="70" width="1" height="1" fill="#fff"/><rect x="186" y="70" width="1" height="1" fill="#000"/><rect x="183" y="71" width="1" height="1" fill="#000"/><rect x="184" y="71" width="1" height="1" fill="#fff"/><rect x="185" y="71" width="1" height="1" fill="#fff"/><rect x="186" y="71" width="1" height="1" fill="#fff"/><rect x="187" y="71" width="1" height="1" fill="#000"/><rect x="183" y="72" width="1" height="1" fill="#000"/><rect x="184" y="72" width="1" height="1" fill="#fff"/><rect x="185" y="72" width="1" height="1" fill="#fff"/><rect x="186" y="72" width="1" height="1" fill="#fff"/><rect x="187" y="72" width="1" height="1" fill="#fff"/><rect x="188" y="72" width="1" height="1" fill="#000"/><rect x="183" y="73" width="1" height="1" fill="#000"/><rect x="184" y="73" width="1" height="1" fill="#fff"/><rect x="185" y="73" width="1" height="1" fill="#fff"/><rect x="186" y="73" width="1" height="1" fill="#fff"/><rect x="187" y="73" width="1" height="1" fill="#fff"/><rect x="188" y="73" width="1" height="1" fill="#fff"/><rect x="189" y="73" width="1" height="1" fill="#000"/><rect x="183" y="74" width="1" height="1" fill="#000"/><rect x="184" y="74" width="1" height="1" fill="#fff"/><rect x="185" y="74" width="1" height="1" fill="#fff"/><rect x="186" y="74" width="1" height="1" fill="#fff"/><rect x="187" y="74" width="1" height="1" fill="#fff"/><rect x="188" y="74" width="1" height="1" fill="#fff"/><rect x="189" y="74" width="1" height="1" fill="#fff"/><rect x="190" y="74" width="1" height="1" fill="#000"/><rect x="183" y="75" width="1" height="1" fill="#000"/><rect x="184" y="75" width="1" height="1" fill="#fff"/><rect x="185" y="75" width="1" height="1" fill="#fff"/><rect x="186" y="75" width="1" height="1" fill="#fff"/><rect x="187" y="75" width="1" height="1" fill="#fff"/><rect x="188" y="75" width="1" height="1" fill="#fff"/><rect x="189" y="75" width="1" height="1" fill="#fff"/><rect x="190" y="75" width="1" height="1" fill="#fff"/><rect x="191" y="75" width="1" height="1" fill="#000"/><rect x="183" y="76" width="1" height="1" fill="#000"/><rect x="184" y="76" width="1" height="1" fill="#fff"/><rect x="185" y="76" width="1" height="1" fill="#fff"/><rect x="186" y="76" width="1" height="1" fill="#fff"/><rect x="187" y="76" width="1" height="1" fill="#fff"/><rect x="188" y="76" width="1" height="1" fill="#fff"/><rect x="189" y="76" width="1" height="1" fill="#fff"/><rect x="190" y="76" width="1" height="1" fill="#fff"/><rect x="191" y="76" width="1" height="1" fill="#fff"/><rect x="192" y="76" width="1" height="1" fill="#000"/><rect x="183" y="77" width="1" height="1" fill="#000"/><rect x="184" y="77" width="1" height="1" fill="#fff"/><rect x="185" y="77" width="1" height="1" fill="#fff"/><rect x="186" y="77" width="1" height="1" fill="#fff"/><rect x="187" y="77" width="1" height="1" fill="#fff"/><rect x="188" y="77" width="1" height="1" fill="#fff"/><rect x="189" y="77" width="1" height="1" fill="#fff"/><rect x="190" y="77" width="1" height="1" fill="#fff"/><rect x="191" y="77" width="1" height="1" fill="#fff"/><rect x="192" y="77" width="1" height="1" fill="#fff"/><rect x="193" y="77" width="1" height="1" fill="#000"/><rect x="183" y="78" width="1" height="1" fill="#000"/><rect x="184" y="78" width="1" height="1" fill="#fff"/><rect x="185" y="78" width="1" height="1" fill="#fff"/><rect x="186" y="78" width="1" height="1" fill="#fff"/><rect x="187" y="78" width="1" height="1" fill="#fff"/><rect x="188" y="78" width="1" height="1" fill="#fff"/><rect x="189" y="78" width="1" height="1" fill="#fff"/><rect x="190" y="78" width="1" height="1" fill="#000"/><rect x="191" y="78" width="1" height="1" fill="#000"/><rect x="192" y="78" width="1" height="1" fill="#000"/><rect x="193" y="78" width="1" height="1" fill="#000"/><rect x="194" y="78" width="1" height="1" fill="#000"/><rect x="183" y="79" width="1" height="1" fill="#000"/><rect x="184" y="79" width="1" height="1" fill="#fff"/><rect x="185" y="79" width="1" height="1" fill="#fff"/><rect x="186" y="79" width="1" height="1" fill="#fff"/><rect x="187" y="79" width="1" height="1" fill="#000"/><rect x="188" y="79" width="1" height="1" fill="#fff"/><rect x="189" y="79" width="1" height="1" fill="#fff"/><rect x="190" y="79" width="1" height="1" fill="#000"/><rect x="183" y="80" width="1" height="1" fill="#000"/><rect x="184" y="80" width="1" height="1" fill="#fff"/><rect x="185" y="80" width="1" height="1" fill="#fff"/><rect x="186" y="80" width="1" height="1" fill="#000"/><rect x="187" y="80" width="1" height="1" fill="#000"/><rect x="188" y="80" width="1" height="1" fill="#fff"/><rect x="189" y="80" width="1" height="1" fill="#fff"/><rect x="190" y="80" width="1" height="1" fill="#000"/><rect x="183" y="81" width="1" height="1" fill="#000"/><rect x="184" y="81" width="1" height="1" fill="#fff"/><rect x="185" y="81" width="1" height="1" fill="#000"/><rect x="188" y="81" width="1" height="1" fill="#000"/><rect x="189" y="81" width="1" height="1" fill="#fff"/><rect x="190" y="81" width="1" height="1" fill="#fff"/><rect x="191" y="81" width="1" height="1" fill="#000"/><rect x="183" y="82" width="1" height="1" fill="#000"/><rect x="184" y="82" width="1" height="1" fill="#000"/><rect x="188" y="82" width="1" height="1" fill="#000"/><rect x="189" y="82" width="1" height="1" fill="#fff"/><rect x="190" y="82" width="1" height="1" fill="#fff"/><rect x="191" y="82" width="1" height="1" fill="#000"/><rect x="183" y="83" width="1" height="1" fill="#000"/><rect x="189" y="83" width="1" height="1" fill="#000"/><rect x="190" y="83" width="1" height="1" fill="#fff"/><rect x="191" y="83" width="1" height="1" fill="#fff"/><rect x="192" y="83" width="1" height="1" fill="#000"/><rect x="189" y="84" width="1" height="1" fill="#000"/><rect x="190" y="84" width="1" height="1" fill="#fff"/><rect x="191" y="84" width="1" height="1" fill="#fff"/><rect x="192" y="84" width="1" height="1" fill="#000"/><rect x="190" y="85" width="1" height="1" fill="#000"/><rect x="191" y="85" width="1" height="1" fill="#000"/>
</svg>
</body></html>
